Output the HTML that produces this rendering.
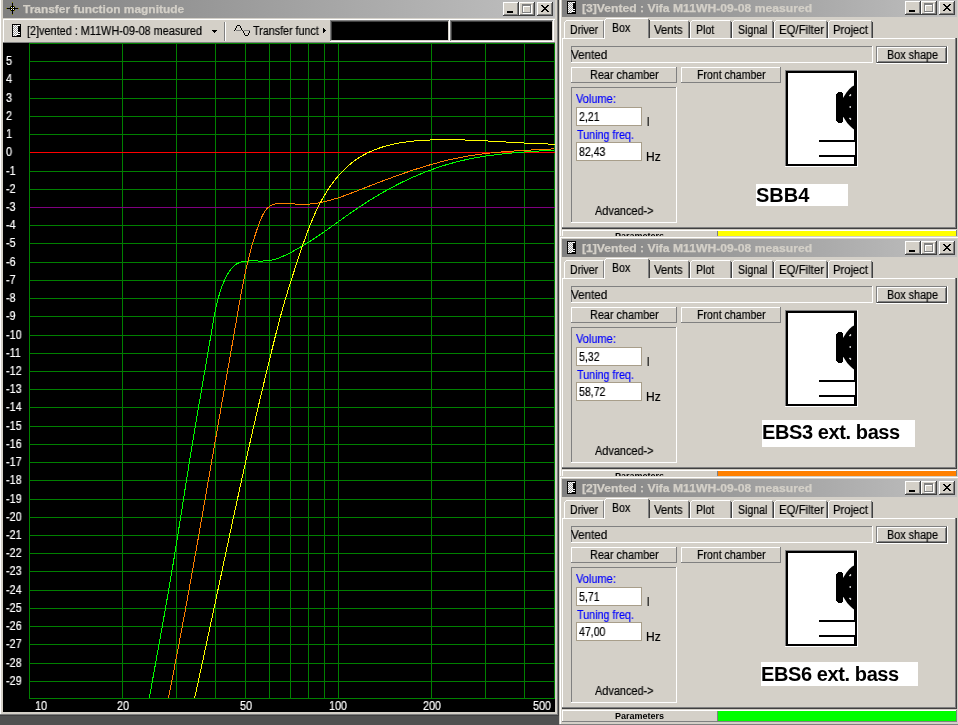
<!DOCTYPE html><html><head><meta charset="utf-8"><style>html,body{margin:0;padding:0}body{width:958px;height:725px;position:relative;overflow:hidden;background:#505050}body>div,body>span,body>svg,div>span{position:absolute}span{white-space:pre;line-height:normal;-webkit-font-smoothing:antialiased;will-change:transform}.u{font:12px 'Liberation Sans',sans-serif;transform-origin:0 0;-webkit-text-stroke:.2px}</style></head><body><div style="left:0px;top:0px;width:559px;height:716px;background:#404040;"></div>
<div style="left:0px;top:0px;width:558px;height:715px;background:#808080;"></div>
<div style="left:0px;top:0px;width:557px;height:714px;background:#d4d0c8;"></div>
<div style="left:0px;top:0px;width:1px;height:714px;background:#fff;"></div>
<div style="left:3px;top:0px;width:552px;height:18px;background:linear-gradient(to right,#808080,#c0c0c0);"></div>
<svg style="left:6px;top:2px" width="13" height="13" viewBox="0 0 13 13" shape-rendering="crispEdges"><rect x="6" y="0" width="1" height="13" fill="#000"/><rect x="0" y="6" width="13" height="1" fill="#000"/><rect x="4" y="4" width="5" height="5" fill="#000"/><rect x="5" y="5" width="1" height="1" fill="#fff"/><rect x="7" y="5" width="1" height="1" fill="#fff"/><rect x="5" y="7" width="1" height="1" fill="#fff"/><rect x="7" y="7" width="1" height="1" fill="#fff"/><rect x="6" y="0" width="1" height="1" fill="#808000"/><rect x="6" y="12" width="1" height="1" fill="#808000"/><rect x="0" y="6" width="1" height="1" fill="#808000"/><rect x="12" y="6" width="1" height="1" fill="#808000"/><rect x="4" y="4" width="1" height="1" fill="#808000"/><rect x="8" y="4" width="1" height="1" fill="#808000"/><rect x="4" y="8" width="1" height="1" fill="#808000"/><rect x="8" y="8" width="1" height="1" fill="#808000"/><rect x="6" y="6" width="1" height="1" fill="#808000"/></svg>
<span style="left:23px;top:3px;font:bold 11px 'Liberation Sans', sans-serif;color:#d4d0c8;transform:scaleX(1.085);transform-origin:0 0;-webkit-text-stroke:.25px">Transfer function magnitude</span>
<div style="left:503px;top:2px;width:16px;height:14px;background:#d4d0c8;"></div>
<div style="left:503px;top:2px;width:15px;height:1px;background:#fff;"></div>
<div style="left:503px;top:2px;width:1px;height:13px;background:#fff;"></div>
<div style="left:504px;top:14px;width:14px;height:1px;background:#808080;"></div>
<div style="left:517px;top:3px;width:1px;height:12px;background:#808080;"></div>
<div style="left:503px;top:15px;width:16px;height:1px;background:#404040;"></div>
<div style="left:518px;top:2px;width:1px;height:14px;background:#404040;"></div>
<div style="left:507px;top:11px;width:6px;height:2px;background:#000;"></div>
<div style="left:519px;top:2px;width:16px;height:14px;background:#d4d0c8;"></div>
<div style="left:519px;top:2px;width:15px;height:1px;background:#fff;"></div>
<div style="left:519px;top:2px;width:1px;height:13px;background:#fff;"></div>
<div style="left:520px;top:14px;width:14px;height:1px;background:#808080;"></div>
<div style="left:533px;top:3px;width:1px;height:12px;background:#808080;"></div>
<div style="left:519px;top:15px;width:16px;height:1px;background:#404040;"></div>
<div style="left:534px;top:2px;width:1px;height:14px;background:#404040;"></div>
<div style="left:523px;top:5px;width:9px;height:2px;background:#fff;"></div>
<div style="left:523px;top:5px;width:1px;height:9px;background:#fff;"></div>
<div style="left:531px;top:5px;width:1px;height:9px;background:#fff;"></div>
<div style="left:523px;top:13px;width:9px;height:1px;background:#fff;"></div>
<div style="left:522px;top:4px;width:9px;height:2px;background:#808080;"></div>
<div style="left:522px;top:4px;width:1px;height:9px;background:#808080;"></div>
<div style="left:530px;top:4px;width:1px;height:9px;background:#808080;"></div>
<div style="left:522px;top:12px;width:9px;height:1px;background:#808080;"></div>
<div style="left:537px;top:2px;width:16px;height:14px;background:#d4d0c8;"></div>
<div style="left:537px;top:2px;width:15px;height:1px;background:#fff;"></div>
<div style="left:537px;top:2px;width:1px;height:13px;background:#fff;"></div>
<div style="left:538px;top:14px;width:14px;height:1px;background:#808080;"></div>
<div style="left:551px;top:3px;width:1px;height:12px;background:#808080;"></div>
<div style="left:537px;top:15px;width:16px;height:1px;background:#404040;"></div>
<div style="left:552px;top:2px;width:1px;height:14px;background:#404040;"></div>
<svg style="left:541px;top:5px" width="8" height="7" viewBox="0 0 8 7"><path d="M0 0h2l2 2.5 2-2.5h2L5 3.5 8 7H6L4 4.5 2 7H0l3-3.5z" fill="#000" shape-rendering="crispEdges"/></svg>
<div style="left:3px;top:19px;width:552px;height:1px;background:#fff;"></div>
<div style="left:3px;top:19px;width:1px;height:23px;background:#fff;"></div>
<div style="left:3px;top:42px;width:552px;height:1px;background:#808080;"></div>
<svg style="left:12px;top:24px" width="9" height="13" viewBox="0 0 9 13" shape-rendering="crispEdges"><rect width="9" height="13" fill="#000"/><rect x="1" y="1" width="5" height="9" fill="#a0a0a0"/><rect x="1" y="10" width="4" height="2" fill="#a0a0a0"/><rect x="1" y="1" width="1" height="1" fill="#fff"/><rect x="3" y="1" width="1" height="1" fill="#fff"/><rect x="5" y="1" width="1" height="1" fill="#fff"/><rect x="2" y="2" width="1" height="1" fill="#fff"/><rect x="4" y="2" width="1" height="1" fill="#fff"/><rect x="1" y="3" width="1" height="1" fill="#fff"/><rect x="3" y="3" width="1" height="1" fill="#fff"/><rect x="5" y="3" width="1" height="1" fill="#fff"/><rect x="2" y="4" width="1" height="1" fill="#fff"/><rect x="4" y="4" width="1" height="1" fill="#fff"/><rect x="1" y="5" width="1" height="1" fill="#fff"/><rect x="3" y="5" width="1" height="1" fill="#fff"/><rect x="5" y="5" width="1" height="1" fill="#fff"/><rect x="2" y="6" width="1" height="1" fill="#fff"/><rect x="4" y="6" width="1" height="1" fill="#fff"/><rect x="1" y="7" width="1" height="1" fill="#fff"/><rect x="3" y="7" width="1" height="1" fill="#fff"/><rect x="5" y="7" width="1" height="1" fill="#fff"/><rect x="2" y="8" width="1" height="1" fill="#fff"/><rect x="4" y="8" width="1" height="1" fill="#fff"/><rect x="1" y="9" width="1" height="1" fill="#fff"/><rect x="3" y="9" width="1" height="1" fill="#fff"/><rect x="5" y="9" width="1" height="1" fill="#fff"/><rect x="2" y="10" width="1" height="1" fill="#fff"/><rect x="4" y="10" width="1" height="1" fill="#fff"/><rect x="1" y="11" width="1" height="1" fill="#fff"/><rect x="3" y="11" width="1" height="1" fill="#fff"/><rect x="6" y="1" width="2" height="1" fill="#fff"/><rect x="6" y="8" width="2" height="1" fill="#fff"/><rect x="5" y="10" width="3" height="1" fill="#fff"/></svg>
<span class="u" style="left:27px;top:24px;color:#000;transform:scaleX(0.906)">[2]vented : M11WH-09-08 measured</span>
<svg style="left:212px;top:30px" width="5" height="3" viewBox="0 0 5 3" shape-rendering="crispEdges"><path d="M0 0h5v1H4v1H3v1H2V2H1V1H0z" fill="#000"/></svg>
<div style="left:224px;top:22px;width:1px;height:19px;background:#808080;"></div>
<div style="left:225px;top:22px;width:1px;height:19px;background:#fff;"></div>
<svg style="left:230px;top:22px" width="24" height="16" viewBox="0 0 24 16" shape-rendering="crispEdges"><rect x="4" y="8" width="1" height="1" fill="#000"/><rect x="5" y="7" width="1" height="1" fill="#000"/><rect x="5" y="6" width="1" height="1" fill="#000"/><rect x="6" y="5" width="1" height="1" fill="#000"/><rect x="6" y="4" width="1" height="1" fill="#000"/><rect x="7" y="3" width="1" height="1" fill="#000"/><rect x="8" y="3" width="1" height="1" fill="#000"/><rect x="9" y="3" width="1" height="1" fill="#000"/><rect x="10" y="4" width="1" height="1" fill="#000"/><rect x="10" y="5" width="1" height="1" fill="#000"/><rect x="11" y="6" width="1" height="1" fill="#000"/><rect x="11" y="7" width="1" height="1" fill="#000"/><rect x="12" y="8" width="1" height="1" fill="#000"/><rect x="13" y="9" width="1" height="1" fill="#000"/><rect x="13" y="10" width="1" height="1" fill="#000"/><rect x="14" y="11" width="1" height="1" fill="#000"/><rect x="14" y="12" width="1" height="1" fill="#000"/><rect x="15" y="13" width="1" height="1" fill="#000"/><rect x="16" y="13" width="1" height="1" fill="#000"/><rect x="17" y="13" width="1" height="1" fill="#000"/><rect x="18" y="12" width="1" height="1" fill="#000"/><rect x="18" y="11" width="1" height="1" fill="#000"/><rect x="19" y="10" width="1" height="1" fill="#000"/><rect x="19" y="9" width="1" height="1" fill="#000"/><rect x="6" y="8" width="5" height="1" fill="#808080"/><rect x="14" y="8" width="6" height="1" fill="#808080"/></svg>
<span class="u" style="left:253px;top:24px;color:#000;transform:scaleX(0.894)">Transfer funct</span>
<svg style="left:323px;top:28px" width="3" height="5" viewBox="0 0 3 5" shape-rendering="crispEdges"><path d="M0 0h1v1h1v1h1v1H2v1H1v1H0z" fill="#000"/></svg>
<div style="left:330px;top:20px;width:120px;height:22px;background:#fff;"></div>
<div style="left:330px;top:20px;width:119px;height:21px;background:#808080;"></div>
<div style="left:331px;top:21px;width:118px;height:20px;background:#d4d0c8;"></div>
<div style="left:331px;top:21px;width:117px;height:19px;background:#404040;"></div>
<div style="left:332px;top:22px;width:116px;height:18px;background:#000;"></div>
<div style="left:450px;top:20px;width:104px;height:22px;background:#fff;"></div>
<div style="left:450px;top:20px;width:103px;height:21px;background:#808080;"></div>
<div style="left:451px;top:21px;width:102px;height:20px;background:#d4d0c8;"></div>
<div style="left:451px;top:21px;width:101px;height:19px;background:#404040;"></div>
<div style="left:452px;top:22px;width:100px;height:18px;background:#000;"></div>
<div style="left:3px;top:43px;width:552px;height:669px;background:#000;"></div>
<svg style="left:0;top:0" width="958" height="725" viewBox="0 0 958 725" shape-rendering="crispEdges"><rect x="29" y="43" width="1" height="656" fill="#008000"/><rect x="122" y="43" width="1" height="656" fill="#008000"/><rect x="176" y="43" width="1" height="656" fill="#008000"/><rect x="215" y="43" width="1" height="656" fill="#008000"/><rect x="245" y="43" width="1" height="656" fill="#008000"/><rect x="269" y="43" width="1" height="656" fill="#008000"/><rect x="290" y="43" width="1" height="656" fill="#008000"/><rect x="308" y="43" width="1" height="656" fill="#008000"/><rect x="324" y="43" width="1" height="656" fill="#008000"/><rect x="338" y="43" width="1" height="656" fill="#008000"/><rect x="431" y="43" width="1" height="656" fill="#008000"/><rect x="485" y="43" width="1" height="656" fill="#008000"/><rect x="524" y="43" width="1" height="656" fill="#008000"/><rect x="554" y="43" width="1" height="656" fill="#008000"/><rect x="29" y="43" width="526" height="1" fill="#008000"/><rect x="29" y="61" width="526" height="1" fill="#008000"/><rect x="29" y="79" width="526" height="1" fill="#008000"/><rect x="29" y="98" width="526" height="1" fill="#008000"/><rect x="29" y="116" width="526" height="1" fill="#008000"/><rect x="29" y="134" width="526" height="1" fill="#008000"/><rect x="30" y="152" width="525" height="1" fill="#ff0000"/><rect x="29" y="171" width="526" height="1" fill="#008000"/><rect x="29" y="189" width="526" height="1" fill="#008000"/><rect x="30" y="207" width="525" height="1" fill="#800080"/><rect x="29" y="225" width="526" height="1" fill="#008000"/><rect x="29" y="243" width="526" height="1" fill="#008000"/><rect x="29" y="262" width="526" height="1" fill="#008000"/><rect x="29" y="280" width="526" height="1" fill="#008000"/><rect x="29" y="298" width="526" height="1" fill="#008000"/><rect x="29" y="316" width="526" height="1" fill="#008000"/><rect x="29" y="335" width="526" height="1" fill="#008000"/><rect x="29" y="353" width="526" height="1" fill="#008000"/><rect x="29" y="371" width="526" height="1" fill="#008000"/><rect x="29" y="389" width="526" height="1" fill="#008000"/><rect x="29" y="407" width="526" height="1" fill="#008000"/><rect x="29" y="426" width="526" height="1" fill="#008000"/><rect x="29" y="444" width="526" height="1" fill="#008000"/><rect x="29" y="462" width="526" height="1" fill="#008000"/><rect x="29" y="480" width="526" height="1" fill="#008000"/><rect x="29" y="499" width="526" height="1" fill="#008000"/><rect x="29" y="517" width="526" height="1" fill="#008000"/><rect x="29" y="535" width="526" height="1" fill="#008000"/><rect x="29" y="553" width="526" height="1" fill="#008000"/><rect x="29" y="571" width="526" height="1" fill="#008000"/><rect x="29" y="590" width="526" height="1" fill="#008000"/><rect x="29" y="608" width="526" height="1" fill="#008000"/><rect x="29" y="626" width="526" height="1" fill="#008000"/><rect x="29" y="644" width="526" height="1" fill="#008000"/><rect x="29" y="663" width="526" height="1" fill="#008000"/><rect x="29" y="681" width="526" height="1" fill="#008000"/><rect x="29" y="698" width="526" height="1" fill="#008000"/><clipPath id="pc"><rect x="29" y="43" width="526" height="656"/></clipPath><g clip-path="url(#pc)" fill="none" stroke-width="1" shape-rendering="crispEdges"><path d="M149.30 698.41 L149.56 696.93 L149.82 695.45 L150.08 693.97 L150.34 692.49 L150.61 691.02 L150.87 689.54 L151.13 688.06 L151.40 686.58 L151.66 685.11 L151.92 683.63 L152.19 682.15 L152.45 680.67 L152.72 679.20 L152.98 677.72 L153.25 676.24 L153.51 674.77 L153.78 673.29 L154.04 671.81 L154.31 670.34 L154.57 668.86 L154.84 667.38 L155.11 665.91 L155.37 664.43 L155.64 662.95 L155.91 661.48 L156.17 660.00 L156.44 658.53 L156.71 657.05 L156.97 655.57 L157.24 654.10 L157.51 652.62 L157.77 651.15 L158.04 649.67 L158.31 648.19 L158.57 646.72 L158.84 645.24 L159.11 643.77 L159.37 642.29 L159.64 640.82 L159.91 639.34 L160.17 637.86 L160.44 636.39 L160.70 634.91 L160.97 633.44 L161.24 631.96 L161.50 630.49 L161.77 629.01 L162.03 627.53 L162.30 626.06 L162.56 624.58 L162.83 623.11 L163.09 621.63 L163.35 620.15 L163.62 618.68 L163.88 617.20 L164.14 615.73 L164.41 614.25 L164.67 612.77 L164.93 611.30 L165.19 609.82 L165.46 608.35 L165.72 606.87 L165.98 605.39 L166.24 603.92 L166.50 602.44 L166.76 600.96 L167.02 599.49 L167.28 598.01 L167.54 596.53 L167.79 595.06 L168.05 593.58 L168.31 592.10 L168.56 590.62 L168.82 589.15 L169.08 587.67 L169.33 586.19 L169.59 584.71 L169.84 583.24 L170.09 581.76 L170.35 580.28 L170.60 578.80 L170.85 577.32 L171.10 575.84 L171.35 574.37 L171.60 572.89 L171.85 571.41 L172.10 569.93 L172.35 568.45 L172.60 566.97 L172.84 565.49 L173.09 564.01 L173.33 562.53 L173.58 561.05 L173.82 559.57 L174.07 558.09 L174.31 556.61 L174.55 555.13 L174.80 553.65 L175.04 552.17 L175.28 550.69 L175.52 549.21 L175.76 547.73 L176.00 546.25 L176.24 544.77 L176.48 543.28 L176.72 541.80 L176.96 540.32 L177.20 538.84 L177.43 537.36 L177.67 535.88 L177.91 534.40 L178.15 532.91 L178.38 531.43 L178.62 529.95 L178.86 528.47 L179.09 526.99 L179.33 525.51 L179.56 524.02 L179.80 522.54 L180.03 521.06 L180.27 519.58 L180.50 518.10 L180.74 516.61 L180.97 515.13 L181.21 513.65 L181.44 512.17 L181.67 510.68 L181.91 509.20 L182.14 507.72 L182.37 506.24 L182.61 504.76 L182.84 503.27 L183.08 501.79 L183.31 500.31 L183.54 498.83 L183.78 497.35 L184.01 495.86 L184.24 494.38 L184.48 492.90 L184.71 491.42 L184.95 489.94 L185.18 488.45 L185.41 486.97 L185.65 485.49 L185.88 484.01 L186.12 482.53 L186.35 481.05 L186.59 479.56 L186.82 478.08 L187.06 476.60 L187.29 475.12 L187.53 473.64 L187.77 472.16 L188.00 470.68 L188.24 469.20 L188.48 467.72 L188.71 466.24 L188.95 464.75 L189.19 463.27 L189.43 461.79 L189.67 460.31 L189.90 458.83 L190.14 457.35 L190.38 455.87 L190.62 454.39 L190.86 452.91 L191.11 451.43 L191.35 449.96 L191.59 448.48 L191.83 447.00 L192.08 445.52 L192.32 444.04 L192.56 442.56 L192.81 441.08 L193.05 439.60 L193.30 438.13 L193.54 436.65 L193.79 435.17 L194.04 433.69 L194.28 432.21 L194.53 430.74 L194.78 429.26 L195.03 427.78 L195.28 426.30 L195.53 424.83 L195.78 423.35 L196.03 421.87 L196.28 420.40 L196.53 418.92 L196.78 417.44 L197.03 415.97 L197.28 414.49 L197.53 413.01 L197.79 411.54 L198.04 410.06 L198.29 408.58 L198.54 407.11 L198.80 405.63 L199.05 404.15 L199.30 402.68 L199.56 401.20 L199.81 399.72 L200.07 398.25 L200.32 396.77 L200.58 395.29 L200.83 393.82 L201.08 392.34 L201.34 390.86 L201.59 389.39 L201.85 387.91 L202.11 386.43 L202.36 384.96 L202.62 383.48 L202.87 382.00 L203.13 380.52 L203.38 379.05 L203.64 377.57 L203.89 376.09 L204.15 374.61 L204.40 373.14 L204.66 371.66 L204.92 370.18 L205.17 368.70 L205.43 367.23 L205.68 365.75 L205.94 364.27 L206.19 362.79 L206.45 361.31 L206.70 359.83 L206.96 358.35 L207.21 356.87 L207.47 355.40 L207.72 353.92 L207.97 352.44 L208.23 350.96 L208.48 349.48 L208.73 348.00 L208.99 346.52 L209.24 345.04 L209.49 343.55 L209.75 342.07 L210.00 340.59 L210.25 339.11 L210.50 337.63 L210.75 336.15 L211.01 334.66 L211.26 333.18 L211.51 331.70 L211.76 330.22 L212.01 328.73 L212.26 327.25 L212.51 325.77 L212.76 324.28 L213.01 322.80 L213.27 321.32 L213.53 319.84 L213.80 318.36 L214.07 316.88 L214.34 315.40 L214.62 313.92 L214.91 312.45 L215.21 310.97 L215.51 309.50 L215.82 308.03 L216.15 306.57 L216.48 305.10 L216.82 303.64 L217.18 302.18 L217.54 300.72 L217.92 299.27 L218.32 297.82 L218.73 296.38 L219.15 294.94 L219.59 293.50 L220.04 292.06 L220.51 290.63 L221.00 289.21 L221.51 287.79 L222.03 286.37 L222.58 284.96 L223.14 283.55 L223.73 282.15 L224.34 280.76 L224.97 279.37 L225.62 277.99 L226.30 276.62 L227.00 275.27 L227.74 273.95 L228.51 272.66 L229.31 271.41 L230.15 270.20 L231.02 269.05 L231.94 267.96 L232.90 266.93 L233.90 265.98 L234.95 265.11 L236.05 264.32 L237.20 263.63 L238.41 263.03 L239.66 262.53 L240.96 262.11 L242.31 261.77 L243.69 261.50 L245.12 261.29 L246.57 261.13 L248.05 261.03 L249.56 260.97 L251.09 260.93 L252.64 260.93 L254.21 260.94 L255.79 260.97 L257.37 260.99 L258.96 261.02 L260.55 261.03 L262.14 261.02 L263.72 260.99 L265.30 260.92 L266.86 260.82 L268.40 260.66 L269.93 260.45 L271.43 260.18 L272.91 259.85 L274.37 259.47 L275.82 259.04 L277.24 258.57 L278.65 258.06 L280.05 257.52 L281.44 256.94 L282.81 256.34 L284.17 255.72 L285.53 255.08 L286.88 254.43 L288.22 253.77 L289.55 253.09 L290.88 252.41 L292.21 251.72 L293.52 251.01 L294.84 250.30 L296.14 249.58 L297.45 248.85 L298.74 248.11 L300.03 247.36 L301.32 246.61 L302.61 245.85 L303.88 245.08 L305.16 244.30 L306.43 243.52 L307.70 242.73 L308.96 241.93 L310.22 241.13 L311.47 240.32 L312.73 239.50 L313.98 238.68 L315.22 237.86 L316.47 237.03 L317.71 236.19 L318.95 235.35 L320.18 234.51 L321.42 233.66 L322.65 232.81 L323.88 231.96 L325.11 231.10 L326.34 230.24 L327.56 229.38 L328.79 228.51 L330.01 227.65 L331.23 226.78 L332.46 225.91 L333.68 225.04 L334.90 224.16 L336.12 223.29 L337.34 222.42 L338.56 221.54 L339.79 220.67 L341.01 219.80 L342.23 218.92 L343.46 218.05 L344.68 217.18 L345.91 216.31 L347.13 215.44 L348.36 214.58 L349.59 213.71 L350.82 212.85 L352.06 211.99 L353.29 211.13 L354.53 210.28 L355.77 209.43 L357.01 208.58 L358.26 207.74 L359.51 206.90 L360.76 206.07 L362.01 205.24 L363.27 204.42 L364.53 203.60 L365.79 202.78 L367.06 201.97 L368.33 201.17 L369.60 200.37 L370.88 199.57 L372.16 198.78 L373.44 197.99 L374.72 197.21 L376.01 196.44 L377.30 195.67 L378.60 194.90 L379.89 194.14 L381.19 193.39 L382.50 192.64 L383.80 191.90 L385.11 191.16 L386.42 190.43 L387.74 189.70 L389.05 188.98 L390.37 188.27 L391.70 187.56 L393.02 186.86 L394.35 186.16 L395.68 185.47 L397.02 184.78 L398.35 184.11 L399.70 183.43 L401.04 182.77 L402.38 182.11 L403.73 181.45 L405.08 180.80 L406.44 180.16 L407.80 179.53 L409.16 178.90 L410.52 178.28 L411.88 177.66 L413.25 177.06 L414.62 176.45 L416.00 175.86 L417.37 175.27 L418.75 174.69 L420.13 174.12 L421.52 173.55 L422.90 172.99 L424.29 172.44 L425.69 171.89 L427.08 171.35 L428.48 170.82 L429.88 170.30 L431.28 169.78 L432.69 169.27 L434.10 168.77 L435.51 168.28 L436.92 167.79 L438.34 167.31 L439.75 166.84 L441.18 166.38 L442.60 165.93 L444.03 165.48 L445.45 165.04 L446.89 164.61 L448.32 164.18 L449.76 163.77 L451.19 163.36 L452.64 162.96 L454.08 162.57 L455.53 162.19 L456.97 161.82 L458.43 161.45 L459.88 161.09 L461.33 160.74 L462.79 160.40 L464.25 160.07 L465.72 159.75 L467.18 159.43 L468.65 159.13 L470.12 158.83 L471.59 158.53 L473.06 158.25 L474.54 157.97 L476.02 157.70 L477.49 157.44 L478.98 157.18 L480.46 156.93 L481.94 156.69 L483.43 156.46 L484.91 156.23 L486.40 156.00 L487.89 155.79 L489.38 155.58 L490.87 155.37 L492.36 155.17 L493.86 154.98 L495.35 154.79 L496.84 154.60 L498.34 154.43 L499.84 154.25 L501.33 154.08 L502.83 153.92 L504.33 153.76 L505.83 153.60 L507.33 153.45 L508.83 153.31 L510.33 153.16 L511.83 153.02 L513.33 152.89 L514.83 152.76 L516.33 152.63 L517.83 152.50 L519.33 152.38 L520.82 152.26 L522.32 152.14 L523.82 152.03 L525.32 151.92 L526.82 151.81 L528.32 151.70 L529.81 151.60 L531.31 151.49 L532.80 151.39 L534.30 151.29 L535.79 151.19 L537.28 151.10 L538.77 151.00 L540.26 150.91 L541.75 150.81 L543.24 150.72 L544.72 150.63 L546.21 150.54 L547.69 150.45 L549.17 150.35 L550.65 150.26 L552.13 150.17 L553.61 150.08 L554.33 150.04" stroke="#00ff00"/><path d="M168.30 698.41 L168.59 696.94 L168.89 695.46 L169.19 693.99 L169.48 692.52 L169.78 691.05 L170.07 689.58 L170.36 688.11 L170.66 686.64 L170.95 685.17 L171.24 683.69 L171.54 682.22 L171.83 680.75 L172.12 679.28 L172.41 677.81 L172.70 676.33 L172.99 674.86 L173.28 673.39 L173.57 671.92 L173.85 670.45 L174.14 668.97 L174.43 667.50 L174.72 666.03 L175.00 664.56 L175.29 663.08 L175.57 661.61 L175.86 660.14 L176.14 658.66 L176.43 657.19 L176.71 655.72 L176.99 654.25 L177.28 652.77 L177.56 651.30 L177.84 649.83 L178.12 648.35 L178.40 646.88 L178.69 645.41 L178.97 643.93 L179.25 642.46 L179.53 640.99 L179.80 639.51 L180.08 638.04 L180.36 636.56 L180.64 635.09 L180.92 633.62 L181.19 632.14 L181.47 630.67 L181.75 629.19 L182.02 627.72 L182.30 626.25 L182.58 624.77 L182.85 623.30 L183.13 621.82 L183.40 620.35 L183.67 618.87 L183.95 617.40 L184.22 615.93 L184.49 614.45 L184.77 612.98 L185.04 611.50 L185.31 610.03 L185.58 608.55 L185.86 607.08 L186.13 605.60 L186.40 604.13 L186.67 602.65 L186.94 601.18 L187.21 599.70 L187.48 598.23 L187.75 596.75 L188.02 595.28 L188.29 593.80 L188.55 592.33 L188.82 590.85 L189.09 589.37 L189.36 587.90 L189.62 586.42 L189.89 584.95 L190.16 583.47 L190.43 582.00 L190.69 580.52 L190.96 579.04 L191.22 577.57 L191.49 576.09 L191.76 574.62 L192.02 573.14 L192.29 571.67 L192.55 570.19 L192.81 568.71 L193.08 567.24 L193.34 565.76 L193.61 564.28 L193.87 562.81 L194.13 561.33 L194.40 559.86 L194.66 558.38 L194.92 556.90 L195.19 555.43 L195.45 553.95 L195.71 552.47 L195.97 551.00 L196.23 549.52 L196.50 548.04 L196.76 546.57 L197.02 545.09 L197.28 543.61 L197.54 542.14 L197.80 540.66 L198.06 539.18 L198.32 537.71 L198.58 536.23 L198.84 534.75 L199.10 533.28 L199.36 531.80 L199.62 530.32 L199.88 528.85 L200.14 527.37 L200.40 525.89 L200.66 524.42 L200.92 522.94 L201.18 521.46 L201.44 519.98 L201.70 518.51 L201.96 517.03 L202.22 515.55 L202.48 514.08 L202.73 512.60 L202.99 511.12 L203.25 509.64 L203.51 508.17 L203.77 506.69 L204.03 505.21 L204.28 503.74 L204.54 502.26 L204.80 500.78 L205.06 499.30 L205.31 497.83 L205.57 496.35 L205.83 494.87 L206.09 493.39 L206.35 491.92 L206.60 490.44 L206.86 488.96 L207.12 487.48 L207.38 486.01 L207.63 484.53 L207.89 483.05 L208.15 481.57 L208.41 480.10 L208.66 478.62 L208.92 477.14 L209.18 475.66 L209.43 474.19 L209.69 472.71 L209.95 471.23 L210.21 469.75 L210.46 468.28 L210.72 466.80 L210.98 465.32 L211.24 463.84 L211.49 462.36 L211.75 460.89 L212.01 459.41 L212.27 457.93 L212.52 456.45 L212.78 454.98 L213.04 453.50 L213.30 452.02 L213.55 450.54 L213.81 449.07 L214.07 447.59 L214.33 446.11 L214.59 444.63 L214.84 443.16 L215.10 441.68 L215.36 440.20 L215.62 438.72 L215.88 437.24 L216.14 435.77 L216.39 434.29 L216.65 432.81 L216.91 431.33 L217.17 429.86 L217.43 428.38 L217.69 426.90 L217.95 425.42 L218.21 423.95 L218.47 422.47 L218.73 420.99 L218.99 419.51 L219.24 418.03 L219.50 416.56 L219.76 415.08 L220.02 413.60 L220.28 412.12 L220.54 410.65 L220.80 409.17 L221.06 407.69 L221.32 406.21 L221.58 404.74 L221.84 403.26 L222.10 401.78 L222.36 400.30 L222.63 398.83 L222.89 397.35 L223.15 395.87 L223.41 394.39 L223.67 392.92 L223.93 391.44 L224.19 389.96 L224.45 388.48 L224.71 387.01 L224.97 385.53 L225.23 384.05 L225.49 382.58 L225.75 381.10 L226.01 379.62 L226.27 378.14 L226.53 376.67 L226.79 375.19 L227.05 373.71 L227.31 372.24 L227.57 370.76 L227.83 369.28 L228.09 367.80 L228.35 366.33 L228.61 364.85 L228.87 363.37 L229.13 361.90 L229.39 360.42 L229.65 358.94 L229.91 357.47 L230.17 355.99 L230.43 354.51 L230.69 353.04 L230.95 351.56 L231.21 350.08 L231.47 348.61 L231.73 347.13 L231.99 345.65 L232.25 344.18 L232.51 342.70 L232.77 341.22 L233.03 339.75 L233.29 338.27 L233.55 336.80 L233.80 335.32 L234.06 333.84 L234.32 332.37 L234.58 330.89 L234.84 329.41 L235.10 327.94 L235.35 326.46 L235.61 324.99 L235.87 323.51 L236.13 322.03 L236.38 320.56 L236.64 319.08 L236.90 317.61 L237.15 316.13 L237.41 314.66 L237.67 313.18 L237.92 311.71 L238.18 310.23 L238.44 308.76 L238.70 307.28 L238.95 305.81 L239.21 304.33 L239.47 302.86 L239.74 301.38 L240.00 299.91 L240.26 298.43 L240.53 296.96 L240.80 295.49 L241.06 294.01 L241.34 292.54 L241.61 291.07 L241.88 289.60 L242.16 288.13 L242.44 286.66 L242.73 285.19 L243.01 283.72 L243.30 282.25 L243.59 280.78 L243.89 279.31 L244.19 277.84 L244.49 276.37 L244.80 274.91 L245.11 273.44 L245.42 271.97 L245.74 270.51 L246.06 269.04 L246.39 267.58 L246.72 266.12 L247.06 264.66 L247.40 263.19 L247.74 261.73 L248.09 260.27 L248.45 258.81 L248.81 257.36 L249.18 255.90 L249.55 254.44 L249.93 252.99 L250.32 251.53 L250.71 250.08 L251.11 248.63 L251.51 247.17 L251.92 245.72 L252.34 244.27 L252.77 242.82 L253.20 241.38 L253.64 239.93 L254.08 238.48 L254.54 237.04 L255.00 235.59 L255.47 234.15 L255.94 232.71 L256.43 231.27 L256.92 229.83 L257.43 228.39 L257.94 226.96 L258.45 225.52 L258.98 224.09 L259.52 222.66 L260.07 221.23 L260.62 219.80 L261.20 218.39 L261.80 217.01 L262.43 215.65 L263.09 214.33 L263.79 213.05 L264.54 211.83 L265.33 210.66 L266.18 209.56 L267.09 208.54 L268.06 207.60 L269.10 206.75 L270.22 205.99 L271.41 205.34 L272.67 204.78 L273.99 204.31 L275.37 203.93 L276.80 203.63 L278.27 203.41 L279.78 203.25 L281.31 203.16 L282.86 203.13 L284.42 203.16 L285.99 203.23 L287.56 203.34 L289.14 203.47 L290.71 203.63 L292.28 203.79 L293.85 203.94 L295.42 204.08 L296.98 204.19 L298.53 204.27 L300.07 204.33 L301.60 204.35 L303.13 204.35 L304.65 204.32 L306.17 204.27 L307.68 204.19 L309.18 204.08 L310.67 203.95 L312.16 203.80 L313.65 203.62 L315.13 203.43 L316.60 203.21 L318.07 202.97 L319.53 202.71 L320.99 202.43 L322.44 202.13 L323.89 201.82 L325.34 201.48 L326.78 201.13 L328.22 200.77 L329.65 200.39 L331.08 199.99 L332.51 199.58 L333.93 199.16 L335.35 198.72 L336.77 198.28 L338.18 197.82 L339.60 197.35 L341.01 196.87 L342.42 196.38 L343.82 195.88 L345.23 195.38 L346.63 194.87 L348.03 194.35 L349.43 193.82 L350.83 193.29 L352.23 192.76 L353.63 192.22 L355.03 191.68 L356.42 191.14 L357.82 190.59 L359.22 190.05 L360.62 189.50 L362.01 188.95 L363.41 188.41 L364.81 187.86 L366.21 187.32 L367.61 186.77 L369.01 186.23 L370.41 185.68 L371.81 185.14 L373.22 184.60 L374.62 184.06 L376.02 183.52 L377.43 182.98 L378.83 182.44 L380.24 181.90 L381.64 181.37 L383.05 180.84 L384.46 180.31 L385.86 179.78 L387.27 179.25 L388.68 178.72 L390.09 178.20 L391.50 177.68 L392.91 177.16 L394.33 176.65 L395.74 176.13 L397.15 175.62 L398.57 175.12 L399.99 174.61 L401.40 174.11 L402.82 173.61 L404.24 173.12 L405.66 172.62 L407.08 172.14 L408.50 171.65 L409.92 171.17 L411.35 170.69 L412.77 170.22 L414.20 169.75 L415.62 169.28 L417.05 168.82 L418.48 168.36 L419.91 167.91 L421.34 167.46 L422.78 167.02 L424.21 166.58 L425.64 166.14 L427.08 165.71 L428.52 165.29 L429.96 164.87 L431.40 164.46 L432.84 164.05 L434.28 163.64 L435.72 163.25 L437.17 162.85 L438.61 162.47 L440.06 162.09 L441.51 161.71 L442.96 161.34 L444.41 160.98 L445.87 160.62 L447.32 160.27 L448.78 159.93 L450.24 159.59 L451.69 159.26 L453.16 158.94 L454.62 158.62 L456.08 158.31 L457.55 158.01 L459.01 157.71 L460.48 157.42 L461.95 157.14 L463.43 156.87 L464.90 156.60 L466.37 156.34 L467.85 156.09 L469.33 155.85 L470.81 155.61 L472.29 155.38 L473.77 155.15 L475.25 154.93 L476.74 154.72 L478.22 154.51 L479.71 154.31 L481.20 154.11 L482.69 153.92 L484.18 153.74 L485.67 153.56 L487.16 153.38 L488.65 153.22 L490.14 153.05 L491.64 152.89 L493.13 152.74 L494.63 152.59 L496.12 152.44 L497.62 152.30 L499.12 152.16 L500.61 152.03 L502.11 151.90 L503.61 151.78 L505.11 151.66 L506.61 151.54 L508.11 151.42 L509.61 151.31 L511.11 151.20 L512.61 151.10 L514.11 151.00 L515.61 150.90 L517.11 150.80 L518.61 150.70 L520.11 150.61 L521.61 150.52 L523.11 150.43 L524.61 150.35 L526.11 150.26 L527.60 150.18 L529.10 150.10 L530.60 150.02 L532.10 149.94 L533.60 149.86 L535.09 149.79 L536.59 149.71 L538.08 149.63 L539.58 149.56 L541.07 149.49 L542.57 149.41 L544.06 149.34 L545.55 149.27 L547.04 149.19 L548.53 149.12 L550.02 149.05 L551.51 148.97 L553.00 148.90 L554.36 148.83" stroke="#ff8000"/><path d="M194.51 698.39 L194.84 696.92 L195.16 695.46 L195.48 693.99 L195.81 692.53 L196.13 691.06 L196.45 689.60 L196.78 688.13 L197.10 686.67 L197.42 685.20 L197.74 683.73 L198.07 682.27 L198.39 680.80 L198.71 679.34 L199.03 677.87 L199.35 676.41 L199.67 674.94 L199.99 673.48 L200.31 672.01 L200.63 670.54 L200.95 669.08 L201.27 667.61 L201.59 666.15 L201.91 664.68 L202.23 663.21 L202.54 661.75 L202.86 660.28 L203.18 658.82 L203.50 657.35 L203.81 655.88 L204.13 654.42 L204.45 652.95 L204.76 651.49 L205.08 650.02 L205.40 648.55 L205.71 647.09 L206.03 645.62 L206.35 644.15 L206.66 642.69 L206.98 641.22 L207.29 639.75 L207.61 638.29 L207.92 636.82 L208.24 635.36 L208.55 633.89 L208.87 632.42 L209.18 630.96 L209.49 629.49 L209.81 628.02 L210.12 626.56 L210.44 625.09 L210.75 623.62 L211.06 622.16 L211.38 620.69 L211.69 619.22 L212.00 617.76 L212.32 616.29 L212.63 614.82 L212.94 613.36 L213.26 611.89 L213.57 610.42 L213.88 608.96 L214.19 607.49 L214.51 606.02 L214.82 604.55 L215.13 603.09 L215.44 601.62 L215.76 600.15 L216.07 598.69 L216.38 597.22 L216.69 595.75 L217.01 594.29 L217.32 592.82 L217.63 591.35 L217.94 589.89 L218.25 588.42 L218.57 586.95 L218.88 585.49 L219.19 584.02 L219.50 582.55 L219.82 581.09 L220.13 579.62 L220.44 578.15 L220.75 576.69 L221.06 575.22 L221.38 573.75 L221.69 572.29 L222.00 570.82 L222.31 569.35 L222.63 567.89 L222.94 566.42 L223.25 564.95 L223.56 563.49 L223.88 562.02 L224.19 560.55 L224.50 559.09 L224.82 557.62 L225.13 556.15 L225.44 554.69 L225.76 553.22 L226.07 551.75 L226.38 550.29 L226.70 548.82 L227.01 547.35 L227.32 545.89 L227.64 544.42 L227.95 542.95 L228.26 541.49 L228.58 540.02 L228.89 538.56 L229.21 537.09 L229.52 535.62 L229.84 534.16 L230.15 532.69 L230.47 531.22 L230.78 529.76 L231.10 528.29 L231.41 526.83 L231.73 525.36 L232.05 523.89 L232.36 522.43 L232.68 520.96 L232.99 519.50 L233.31 518.03 L233.63 516.56 L233.95 515.10 L234.26 513.63 L234.58 512.17 L234.90 510.70 L235.22 509.24 L235.53 507.77 L235.85 506.31 L236.17 504.84 L236.49 503.37 L236.81 501.91 L237.13 500.44 L237.45 498.98 L237.77 497.51 L238.09 496.05 L238.41 494.58 L238.73 493.12 L239.05 491.65 L239.37 490.19 L239.69 488.72 L240.02 487.26 L240.34 485.79 L240.66 484.33 L240.98 482.86 L241.31 481.40 L241.63 479.93 L241.95 478.47 L242.28 477.01 L242.60 475.54 L242.93 474.08 L243.25 472.61 L243.58 471.15 L243.90 469.68 L244.23 468.22 L244.55 466.76 L244.88 465.29 L245.21 463.83 L245.53 462.36 L245.86 460.90 L246.19 459.44 L246.52 457.97 L246.85 456.51 L247.18 455.05 L247.51 453.58 L247.84 452.12 L248.17 450.66 L248.50 449.19 L248.83 447.73 L249.16 446.27 L249.49 444.80 L249.82 443.34 L250.16 441.88 L250.49 440.41 L250.82 438.95 L251.16 437.49 L251.49 436.03 L251.83 434.56 L252.16 433.10 L252.50 431.64 L252.83 430.18 L253.17 428.71 L253.50 427.25 L253.84 425.79 L254.18 424.33 L254.52 422.87 L254.85 421.40 L255.19 419.94 L255.53 418.48 L255.87 417.02 L256.21 415.56 L256.55 414.10 L256.89 412.64 L257.23 411.17 L257.57 409.71 L257.91 408.25 L258.26 406.79 L258.60 405.33 L258.94 403.87 L259.28 402.41 L259.63 400.95 L259.97 399.49 L260.32 398.03 L260.66 396.57 L261.01 395.11 L261.35 393.65 L261.70 392.19 L262.05 390.73 L262.39 389.27 L262.74 387.81 L263.09 386.35 L263.44 384.89 L263.78 383.43 L264.13 381.97 L264.48 380.51 L264.83 379.05 L265.18 377.59 L265.53 376.13 L265.88 374.67 L266.24 373.21 L266.59 371.75 L266.94 370.29 L267.29 368.84 L267.65 367.38 L268.00 365.92 L268.35 364.46 L268.71 363.00 L269.06 361.54 L269.42 360.09 L269.78 358.63 L270.13 357.17 L270.49 355.71 L270.85 354.25 L271.20 352.80 L271.56 351.34 L271.92 349.88 L272.28 348.42 L272.64 346.97 L273.00 345.51 L273.36 344.06 L273.72 342.60 L274.09 341.14 L274.45 339.69 L274.82 338.23 L275.18 336.78 L275.55 335.32 L275.92 333.87 L276.29 332.42 L276.66 330.97 L277.04 329.51 L277.41 328.06 L277.79 326.61 L278.17 325.16 L278.54 323.71 L278.93 322.26 L279.31 320.82 L279.69 319.37 L280.08 317.92 L280.47 316.48 L280.86 315.03 L281.26 313.59 L281.65 312.15 L282.05 310.71 L282.45 309.27 L282.85 307.83 L283.26 306.39 L283.67 304.95 L284.08 303.52 L284.49 302.08 L284.91 300.65 L285.33 299.22 L285.75 297.79 L286.18 296.36 L286.60 294.93 L287.03 293.51 L287.47 292.08 L287.90 290.65 L288.34 289.23 L288.78 287.81 L289.22 286.38 L289.67 284.96 L290.12 283.54 L290.57 282.12 L291.02 280.70 L291.47 279.28 L291.93 277.86 L292.38 276.44 L292.84 275.01 L293.30 273.59 L293.76 272.17 L294.23 270.75 L294.69 269.33 L295.16 267.91 L295.62 266.49 L296.09 265.06 L296.56 263.64 L297.03 262.21 L297.50 260.79 L297.97 259.36 L298.44 257.93 L298.92 256.51 L299.39 255.08 L299.87 253.65 L300.34 252.22 L300.82 250.79 L301.30 249.36 L301.79 247.93 L302.27 246.50 L302.76 245.07 L303.26 243.64 L303.75 242.21 L304.25 240.79 L304.76 239.36 L305.26 237.94 L305.77 236.51 L306.29 235.09 L306.81 233.67 L307.34 232.26 L307.87 230.84 L308.41 229.43 L308.95 228.02 L309.50 226.61 L310.06 225.21 L310.62 223.81 L311.19 222.41 L311.77 221.01 L312.35 219.62 L312.94 218.23 L313.54 216.85 L314.15 215.47 L314.77 214.09 L315.39 212.72 L316.03 211.36 L316.67 210.00 L317.32 208.64 L317.98 207.29 L318.65 205.94 L319.33 204.60 L320.03 203.26 L320.73 201.93 L321.44 200.61 L322.17 199.29 L322.90 197.98 L323.65 196.68 L324.41 195.38 L325.18 194.09 L325.96 192.80 L326.76 191.52 L327.57 190.25 L328.39 188.99 L329.22 187.74 L330.07 186.49 L330.93 185.26 L331.81 184.03 L332.70 182.82 L333.60 181.62 L334.51 180.43 L335.44 179.25 L336.39 178.08 L337.35 176.93 L338.32 175.79 L339.31 174.67 L340.32 173.56 L341.33 172.46 L342.37 171.39 L343.41 170.33 L344.48 169.28 L345.55 168.25 L346.64 167.24 L347.75 166.25 L348.87 165.28 L350.00 164.32 L351.14 163.39 L352.30 162.47 L353.48 161.57 L354.66 160.69 L355.86 159.84 L357.07 159.00 L358.29 158.19 L359.53 157.40 L360.77 156.63 L362.03 155.88 L363.31 155.15 L364.59 154.45 L365.88 153.76 L367.19 153.10 L368.50 152.46 L369.83 151.84 L371.17 151.24 L372.51 150.66 L373.87 150.10 L375.24 149.55 L376.61 149.03 L377.99 148.53 L379.39 148.04 L380.79 147.57 L382.20 147.12 L383.61 146.68 L385.04 146.27 L386.47 145.87 L387.91 145.48 L389.35 145.11 L390.80 144.76 L392.26 144.42 L393.73 144.10 L395.20 143.79 L396.67 143.50 L398.15 143.22 L399.64 142.95 L401.13 142.70 L402.63 142.46 L404.13 142.23 L405.63 142.02 L407.14 141.81 L408.65 141.62 L410.16 141.44 L411.68 141.27 L413.20 141.11 L414.72 140.97 L416.24 140.83 L417.77 140.70 L419.29 140.58 L420.82 140.47 L422.35 140.37 L423.88 140.28 L425.41 140.20 L426.95 140.12 L428.48 140.06 L430.01 139.99 L431.54 139.94 L433.07 139.89 L434.60 139.85 L436.13 139.82 L437.65 139.79 L439.18 139.76 L440.70 139.74 L442.22 139.73 L443.74 139.72 L445.25 139.71 L446.77 139.71 L448.28 139.72 L449.79 139.72 L451.30 139.73 L452.80 139.75 L454.31 139.77 L455.81 139.79 L457.31 139.82 L458.81 139.85 L460.31 139.88 L461.81 139.92 L463.30 139.96 L464.80 140.00 L466.29 140.05 L467.78 140.10 L469.28 140.15 L470.77 140.20 L472.26 140.26 L473.74 140.32 L475.23 140.38 L476.72 140.44 L478.20 140.51 L479.69 140.58 L481.17 140.65 L482.66 140.72 L484.14 140.79 L485.62 140.87 L487.11 140.95 L488.59 141.02 L490.07 141.10 L491.55 141.18 L493.03 141.26 L494.52 141.35 L496.00 141.43 L497.48 141.51 L498.96 141.60 L500.44 141.68 L501.93 141.77 L503.41 141.85 L504.89 141.94 L506.38 142.03 L507.86 142.11 L509.35 142.20 L510.83 142.28 L512.32 142.37 L513.80 142.45 L515.29 142.54 L516.78 142.62 L518.27 142.70 L519.76 142.79 L521.25 142.87 L522.74 142.95 L524.24 143.02 L525.73 143.10 L527.23 143.18 L528.73 143.25 L530.22 143.32 L531.72 143.39 L533.23 143.46 L534.73 143.53 L536.24 143.60 L537.74 143.66 L539.25 143.72 L540.76 143.78 L542.27 143.83 L543.79 143.89 L545.31 143.94 L546.82 143.98 L548.35 144.03 L549.87 144.07 L551.39 144.11 L552.92 144.14 L554.45 144.17 L554.60 144.18" stroke="#ffff00"/></g></svg>
<span class="u" style="left:6px;top:54px;color:#fff;transform:scaleX(0.9)">5</span>
<span class="u" style="left:6px;top:72px;color:#fff;transform:scaleX(0.9)">4</span>
<span class="u" style="left:6px;top:91px;color:#fff;transform:scaleX(0.9)">3</span>
<span class="u" style="left:6px;top:109px;color:#fff;transform:scaleX(0.9)">2</span>
<span class="u" style="left:6px;top:127px;color:#fff;transform:scaleX(0.9)">1</span>
<span class="u" style="left:6px;top:145px;color:#fff;transform:scaleX(0.9)">0</span>
<span class="u" style="left:6px;top:164px;color:#fff;transform:scaleX(0.9)">-1</span>
<span class="u" style="left:6px;top:182px;color:#fff;transform:scaleX(0.9)">-2</span>
<span class="u" style="left:6px;top:200px;color:#fff;transform:scaleX(0.9)">-3</span>
<span class="u" style="left:6px;top:218px;color:#fff;transform:scaleX(0.9)">-4</span>
<span class="u" style="left:6px;top:236px;color:#fff;transform:scaleX(0.9)">-5</span>
<span class="u" style="left:6px;top:255px;color:#fff;transform:scaleX(0.9)">-6</span>
<span class="u" style="left:6px;top:273px;color:#fff;transform:scaleX(0.9)">-7</span>
<span class="u" style="left:6px;top:291px;color:#fff;transform:scaleX(0.9)">-8</span>
<span class="u" style="left:6px;top:309px;color:#fff;transform:scaleX(0.9)">-9</span>
<span class="u" style="left:6px;top:328px;color:#fff;transform:scaleX(0.9)">-10</span>
<span class="u" style="left:6px;top:346px;color:#fff;transform:scaleX(0.9)">-11</span>
<span class="u" style="left:6px;top:364px;color:#fff;transform:scaleX(0.9)">-12</span>
<span class="u" style="left:6px;top:382px;color:#fff;transform:scaleX(0.9)">-13</span>
<span class="u" style="left:6px;top:400px;color:#fff;transform:scaleX(0.9)">-14</span>
<span class="u" style="left:6px;top:419px;color:#fff;transform:scaleX(0.9)">-15</span>
<span class="u" style="left:6px;top:437px;color:#fff;transform:scaleX(0.9)">-16</span>
<span class="u" style="left:6px;top:455px;color:#fff;transform:scaleX(0.9)">-17</span>
<span class="u" style="left:6px;top:473px;color:#fff;transform:scaleX(0.9)">-18</span>
<span class="u" style="left:6px;top:492px;color:#fff;transform:scaleX(0.9)">-19</span>
<span class="u" style="left:6px;top:510px;color:#fff;transform:scaleX(0.9)">-20</span>
<span class="u" style="left:6px;top:528px;color:#fff;transform:scaleX(0.9)">-21</span>
<span class="u" style="left:6px;top:546px;color:#fff;transform:scaleX(0.9)">-22</span>
<span class="u" style="left:6px;top:564px;color:#fff;transform:scaleX(0.9)">-23</span>
<span class="u" style="left:6px;top:583px;color:#fff;transform:scaleX(0.9)">-24</span>
<span class="u" style="left:6px;top:601px;color:#fff;transform:scaleX(0.9)">-25</span>
<span class="u" style="left:6px;top:619px;color:#fff;transform:scaleX(0.9)">-26</span>
<span class="u" style="left:6px;top:637px;color:#fff;transform:scaleX(0.9)">-27</span>
<span class="u" style="left:6px;top:656px;color:#fff;transform:scaleX(0.9)">-28</span>
<span class="u" style="left:6px;top:674px;color:#fff;transform:scaleX(0.9)">-29</span>
<span class="u" style="left:35px;top:699px;color:#fff;transform:scaleX(0.9)">10</span>
<span class="u" style="left:117px;top:699px;color:#fff;transform:scaleX(0.9)">20</span>
<span class="u" style="left:240px;top:699px;color:#fff;transform:scaleX(0.9)">50</span>
<span class="u" style="left:329px;top:699px;color:#fff;transform:scaleX(0.9)">100</span>
<span class="u" style="left:423px;top:699px;color:#fff;transform:scaleX(0.9)">200</span>
<span class="u" style="left:533px;top:699px;color:#fff;transform:scaleX(0.9)">500</span>
<div style="left:559px;top:-4px;width:399px;height:249px;background:#d4d0c8;"></div>
<div style="left:560px;top:-3px;width:1px;height:248px;background:#fff;"></div>
<div style="left:560px;top:-3px;width:398px;height:1px;background:#fff;"></div>
<div style="left:562px;top:-1px;width:395px;height:18px;background:linear-gradient(to right,#808080,#c0c0c0);"></div>
<svg style="left:567px;top:1px" width="9" height="13" viewBox="0 0 9 13" shape-rendering="crispEdges"><rect width="9" height="13" fill="#000"/><rect x="1" y="1" width="5" height="9" fill="#a0a0a0"/><rect x="1" y="10" width="4" height="2" fill="#a0a0a0"/><rect x="1" y="1" width="1" height="1" fill="#fff"/><rect x="3" y="1" width="1" height="1" fill="#fff"/><rect x="5" y="1" width="1" height="1" fill="#fff"/><rect x="2" y="2" width="1" height="1" fill="#fff"/><rect x="4" y="2" width="1" height="1" fill="#fff"/><rect x="1" y="3" width="1" height="1" fill="#fff"/><rect x="3" y="3" width="1" height="1" fill="#fff"/><rect x="5" y="3" width="1" height="1" fill="#fff"/><rect x="2" y="4" width="1" height="1" fill="#fff"/><rect x="4" y="4" width="1" height="1" fill="#fff"/><rect x="1" y="5" width="1" height="1" fill="#fff"/><rect x="3" y="5" width="1" height="1" fill="#fff"/><rect x="5" y="5" width="1" height="1" fill="#fff"/><rect x="2" y="6" width="1" height="1" fill="#fff"/><rect x="4" y="6" width="1" height="1" fill="#fff"/><rect x="1" y="7" width="1" height="1" fill="#fff"/><rect x="3" y="7" width="1" height="1" fill="#fff"/><rect x="5" y="7" width="1" height="1" fill="#fff"/><rect x="2" y="8" width="1" height="1" fill="#fff"/><rect x="4" y="8" width="1" height="1" fill="#fff"/><rect x="1" y="9" width="1" height="1" fill="#fff"/><rect x="3" y="9" width="1" height="1" fill="#fff"/><rect x="5" y="9" width="1" height="1" fill="#fff"/><rect x="2" y="10" width="1" height="1" fill="#fff"/><rect x="4" y="10" width="1" height="1" fill="#fff"/><rect x="1" y="11" width="1" height="1" fill="#fff"/><rect x="3" y="11" width="1" height="1" fill="#fff"/><rect x="6" y="1" width="2" height="1" fill="#fff"/><rect x="6" y="8" width="2" height="1" fill="#fff"/><rect x="5" y="10" width="3" height="1" fill="#fff"/></svg>
<span style="left:582px;top:2px;font:bold 11px 'Liberation Sans', sans-serif;color:#d4d0c8;transform:scaleX(1.105);transform-origin:0 0;-webkit-text-stroke:.25px">[3]Vented : Vifa M11WH-09-08 measured</span>
<div style="left:905px;top:1px;width:16px;height:14px;background:#d4d0c8;"></div>
<div style="left:905px;top:1px;width:15px;height:1px;background:#fff;"></div>
<div style="left:905px;top:1px;width:1px;height:13px;background:#fff;"></div>
<div style="left:906px;top:13px;width:14px;height:1px;background:#808080;"></div>
<div style="left:919px;top:2px;width:1px;height:12px;background:#808080;"></div>
<div style="left:905px;top:14px;width:16px;height:1px;background:#404040;"></div>
<div style="left:920px;top:1px;width:1px;height:14px;background:#404040;"></div>
<div style="left:909px;top:10px;width:6px;height:2px;background:#000;"></div>
<div style="left:921px;top:1px;width:16px;height:14px;background:#d4d0c8;"></div>
<div style="left:921px;top:1px;width:15px;height:1px;background:#fff;"></div>
<div style="left:921px;top:1px;width:1px;height:13px;background:#fff;"></div>
<div style="left:922px;top:13px;width:14px;height:1px;background:#808080;"></div>
<div style="left:935px;top:2px;width:1px;height:12px;background:#808080;"></div>
<div style="left:921px;top:14px;width:16px;height:1px;background:#404040;"></div>
<div style="left:936px;top:1px;width:1px;height:14px;background:#404040;"></div>
<div style="left:925px;top:4px;width:9px;height:2px;background:#fff;"></div>
<div style="left:925px;top:4px;width:1px;height:9px;background:#fff;"></div>
<div style="left:933px;top:4px;width:1px;height:9px;background:#fff;"></div>
<div style="left:925px;top:12px;width:9px;height:1px;background:#fff;"></div>
<div style="left:924px;top:3px;width:9px;height:2px;background:#808080;"></div>
<div style="left:924px;top:3px;width:1px;height:9px;background:#808080;"></div>
<div style="left:932px;top:3px;width:1px;height:9px;background:#808080;"></div>
<div style="left:924px;top:11px;width:9px;height:1px;background:#808080;"></div>
<div style="left:939px;top:1px;width:16px;height:14px;background:#d4d0c8;"></div>
<div style="left:939px;top:1px;width:15px;height:1px;background:#fff;"></div>
<div style="left:939px;top:1px;width:1px;height:13px;background:#fff;"></div>
<div style="left:940px;top:13px;width:14px;height:1px;background:#808080;"></div>
<div style="left:953px;top:2px;width:1px;height:12px;background:#808080;"></div>
<div style="left:939px;top:14px;width:16px;height:1px;background:#404040;"></div>
<div style="left:954px;top:1px;width:1px;height:14px;background:#404040;"></div>
<svg style="left:943px;top:4px" width="8" height="7" viewBox="0 0 8 7"><path d="M0 0h2l2 2.5 2-2.5h2L5 3.5 8 7H6L4 4.5 2 7H0l3-3.5z" fill="#000" shape-rendering="crispEdges"/></svg>
<div style="left:562px;top:38px;width:395px;height:191px;background:#404040;"></div>
<div style="left:562px;top:38px;width:394px;height:190px;background:#808080;"></div>
<div style="left:562px;top:38px;width:393px;height:189px;background:#fff;"></div>
<div style="left:563px;top:39px;width:392px;height:188px;background:#d4d0c8;"></div>
<div style="left:566px;top:20px;width:37px;height:1px;background:#fff;"></div>
<div style="left:565px;top:21px;width:1px;height:1px;background:#fff;"></div>
<div style="left:564px;top:22px;width:1px;height:16px;background:#fff;"></div>
<div style="left:603px;top:21px;width:1px;height:17px;background:#808080;"></div>
<div style="left:604px;top:22px;width:1px;height:16px;background:#404040;"></div>
<span class="u" style="left:570px;top:23px;color:#000;transform:scaleX(0.88)">Driver</span>
<div style="left:650px;top:20px;width:38px;height:1px;background:#fff;"></div>
<div style="left:649px;top:21px;width:1px;height:1px;background:#fff;"></div>
<div style="left:648px;top:22px;width:1px;height:16px;background:#fff;"></div>
<div style="left:688px;top:21px;width:1px;height:17px;background:#808080;"></div>
<div style="left:689px;top:22px;width:1px;height:16px;background:#404040;"></div>
<span class="u" style="left:654px;top:23px;color:#000;transform:scaleX(0.95)">Vents</span>
<div style="left:692px;top:20px;width:38px;height:1px;background:#fff;"></div>
<div style="left:691px;top:21px;width:1px;height:1px;background:#fff;"></div>
<div style="left:690px;top:22px;width:1px;height:16px;background:#fff;"></div>
<div style="left:730px;top:21px;width:1px;height:17px;background:#808080;"></div>
<div style="left:731px;top:22px;width:1px;height:16px;background:#404040;"></div>
<span class="u" style="left:696px;top:23px;color:#000;transform:scaleX(0.88)">Plot</span>
<div style="left:734px;top:20px;width:38px;height:1px;background:#fff;"></div>
<div style="left:733px;top:21px;width:1px;height:1px;background:#fff;"></div>
<div style="left:732px;top:22px;width:1px;height:16px;background:#fff;"></div>
<div style="left:772px;top:21px;width:1px;height:17px;background:#808080;"></div>
<div style="left:773px;top:22px;width:1px;height:16px;background:#404040;"></div>
<span class="u" style="left:738px;top:23px;color:#000;transform:scaleX(0.88)">Signal</span>
<div style="left:776px;top:20px;width:50px;height:1px;background:#fff;"></div>
<div style="left:775px;top:21px;width:1px;height:1px;background:#fff;"></div>
<div style="left:774px;top:22px;width:1px;height:16px;background:#fff;"></div>
<div style="left:826px;top:21px;width:1px;height:17px;background:#808080;"></div>
<div style="left:827px;top:22px;width:1px;height:16px;background:#404040;"></div>
<span class="u" style="left:779px;top:23px;color:#000;transform:scaleX(0.95)">EQ/Filter</span>
<div style="left:830px;top:20px;width:41px;height:1px;background:#fff;"></div>
<div style="left:829px;top:21px;width:1px;height:1px;background:#fff;"></div>
<div style="left:828px;top:22px;width:1px;height:16px;background:#fff;"></div>
<div style="left:871px;top:21px;width:1px;height:17px;background:#808080;"></div>
<div style="left:872px;top:22px;width:1px;height:16px;background:#404040;"></div>
<span class="u" style="left:833px;top:23px;color:#000;transform:scaleX(0.935)">Project</span>
<div style="left:604px;top:18px;width:46px;height:21px;background:#d4d0c8;"></div>
<div style="left:606px;top:18px;width:42px;height:1px;background:#fff;"></div>
<div style="left:605px;top:19px;width:1px;height:1px;background:#fff;"></div>
<div style="left:604px;top:20px;width:1px;height:19px;background:#fff;"></div>
<div style="left:648px;top:19px;width:1px;height:19px;background:#808080;"></div>
<div style="left:649px;top:20px;width:1px;height:18px;background:#404040;"></div>
<span class="u" style="left:612px;top:21px;color:#000;transform:scaleX(0.88)">Box</span>
<div style="left:571px;top:46px;width:302px;height:1px;background:#808080;"></div>
<div style="left:571px;top:46px;width:1px;height:17px;background:#808080;"></div>
<div style="left:571px;top:62px;width:302px;height:1px;background:#fff;"></div>
<div style="left:872px;top:46px;width:1px;height:17px;background:#fff;"></div>
<span class="u" style="left:571px;top:48px;color:#000;transform:scaleX(0.97)">Vented</span>
<div style="left:876px;top:46px;width:72px;height:1px;background:#808080;"></div>
<div style="left:876px;top:46px;width:1px;height:18px;background:#808080;"></div>
<div style="left:876px;top:63px;width:72px;height:1px;background:#fff;"></div>
<div style="left:947px;top:46px;width:1px;height:18px;background:#fff;"></div>
<div style="left:877px;top:47px;width:70px;height:1px;background:#fff;"></div>
<div style="left:877px;top:47px;width:1px;height:16px;background:#fff;"></div>
<div style="left:877px;top:62px;width:70px;height:1px;background:#404040;"></div>
<div style="left:946px;top:47px;width:1px;height:16px;background:#404040;"></div>
<div style="left:878px;top:61px;width:68px;height:1px;background:#808080;"></div>
<div style="left:945px;top:48px;width:1px;height:14px;background:#808080;"></div>
<span class="u" style="left:887px;top:48px;color:#000;transform:scaleX(0.9)">Box shape</span>
<div style="left:571px;top:67px;width:106px;height:1px;background:#fff;"></div>
<div style="left:571px;top:67px;width:1px;height:16px;background:#fff;"></div>
<div style="left:571px;top:82px;width:106px;height:1px;background:#808080;"></div>
<div style="left:676px;top:67px;width:1px;height:16px;background:#808080;"></div>
<span class="u" style="left:590px;top:68px;color:#000;transform:scaleX(0.905)">Rear chamber</span>
<div style="left:681px;top:67px;width:100px;height:1px;background:#fff;"></div>
<div style="left:681px;top:67px;width:1px;height:16px;background:#fff;"></div>
<div style="left:681px;top:82px;width:100px;height:1px;background:#808080;"></div>
<div style="left:780px;top:67px;width:1px;height:16px;background:#808080;"></div>
<span class="u" style="left:697px;top:68px;color:#000;transform:scaleX(0.88)">Front chamber</span>
<div style="left:571px;top:87px;width:106px;height:1px;background:#808080;"></div>
<div style="left:571px;top:87px;width:1px;height:136px;background:#808080;"></div>
<div style="left:571px;top:222px;width:106px;height:1px;background:#fff;"></div>
<div style="left:676px;top:87px;width:1px;height:136px;background:#fff;"></div>
<span class="u" style="left:576px;top:92px;color:#0000ff;transform:scaleX(0.92)">Volume:</span>
<div style="left:576px;top:107px;width:66px;height:19px;background:#a89e8a;"></div>
<div style="left:577px;top:108px;width:64px;height:17px;background:#fff;"></div>
<span class="u" style="left:579px;top:110px;color:#000;transform:scaleX(0.88)">2,21</span>
<span class="u" style="left:647px;top:115px;color:#000;transform:scaleX(0.88)">l</span>
<div style="left:576px;top:142px;width:66px;height:19px;background:#a89e8a;"></div>
<div style="left:577px;top:143px;width:64px;height:17px;background:#fff;"></div>
<span class="u" style="left:579px;top:145px;color:#000;transform:scaleX(0.88)">82,43</span>
<span class="u" style="left:646px;top:150px;color:#000;transform:scaleX(1.0)">Hz</span>
<span class="u" style="left:577px;top:128px;color:#0000ff;transform:scaleX(0.895)">Tuning freq.</span>
<span class="u" style="left:595px;top:204px;color:#000;transform:scaleX(0.91)">Advanced-&gt;</span>
<svg style="left:785px;top:70px" width="73" height="97" viewBox="0 0 73 97" shape-rendering="crispEdges"><rect x="0" y="0" width="73" height="97" fill="#fff"/><rect x="0" y="0" width="72" height="1" fill="#808080"/><rect x="0" y="0" width="1" height="96" fill="#808080"/><rect x="1" y="1" width="71" height="95" fill="#000"/><rect x="3" y="3" width="66" height="91" fill="#fff"/><rect x="34" y="70" width="35" height="2" fill="#000"/><rect x="34" y="85" width="35" height="2" fill="#000"/><rect x="69" y="72" width="1" height="13" fill="#fff"/><polygon points="51,24 53,22 56,22 58,24 58,51 56,53 53,53 51,51" fill="#000"/><polygon points="58,28 61.5,22.599999999999994 64.39999999999998,19 67.20000000000005,16.5 69,15.400000000000006 69,59.5 68,58.80000000000001 65,56 62.200000000000045,53 58,46.599999999999994" fill="#000" shape-rendering="auto"/><path d="M64.5 26 L66 24.5 M64.5 37 L66 37 M64.5 48 L66 49.5" stroke="#fff" stroke-width="1.3" shape-rendering="auto"/></svg>
<div style="left:756px;top:184px;width:92px;height:22px;background:#fff;"></div>
<span style="left:756px;top:184px;font:bold 20px 'Liberation Sans', sans-serif;color:#000;">SBB4</span>
<div style="left:562px;top:230px;width:395px;height:1px;background:#fff;"></div>
<div style="left:562px;top:230px;width:1px;height:11px;background:#fff;"></div>
<div style="left:562px;top:241px;width:395px;height:1px;background:#808080;"></div>
<div style="left:717px;top:231px;width:1px;height:10px;background:#808080;"></div>
<div style="left:718px;top:231px;width:238px;height:10px;background:#ffff00;"></div>
<div style="left:956px;top:230px;width:1px;height:12px;background:#808080;"></div>
<div style="left:562px;top:231px;width:155px;height:10px;overflow:hidden"><span style="left:53px;top:0px;font:bold 9px 'Liberation Sans', sans-serif;color:#000;letter-spacing:0px">Parameters</span></div>
<div style="left:559px;top:236px;width:399px;height:249px;background:#d4d0c8;"></div>
<div style="left:560px;top:237px;width:1px;height:248px;background:#fff;"></div>
<div style="left:560px;top:237px;width:398px;height:1px;background:#fff;"></div>
<div style="left:562px;top:239px;width:395px;height:18px;background:linear-gradient(to right,#808080,#c0c0c0);"></div>
<svg style="left:567px;top:241px" width="9" height="13" viewBox="0 0 9 13" shape-rendering="crispEdges"><rect width="9" height="13" fill="#000"/><rect x="1" y="1" width="5" height="9" fill="#a0a0a0"/><rect x="1" y="10" width="4" height="2" fill="#a0a0a0"/><rect x="1" y="1" width="1" height="1" fill="#fff"/><rect x="3" y="1" width="1" height="1" fill="#fff"/><rect x="5" y="1" width="1" height="1" fill="#fff"/><rect x="2" y="2" width="1" height="1" fill="#fff"/><rect x="4" y="2" width="1" height="1" fill="#fff"/><rect x="1" y="3" width="1" height="1" fill="#fff"/><rect x="3" y="3" width="1" height="1" fill="#fff"/><rect x="5" y="3" width="1" height="1" fill="#fff"/><rect x="2" y="4" width="1" height="1" fill="#fff"/><rect x="4" y="4" width="1" height="1" fill="#fff"/><rect x="1" y="5" width="1" height="1" fill="#fff"/><rect x="3" y="5" width="1" height="1" fill="#fff"/><rect x="5" y="5" width="1" height="1" fill="#fff"/><rect x="2" y="6" width="1" height="1" fill="#fff"/><rect x="4" y="6" width="1" height="1" fill="#fff"/><rect x="1" y="7" width="1" height="1" fill="#fff"/><rect x="3" y="7" width="1" height="1" fill="#fff"/><rect x="5" y="7" width="1" height="1" fill="#fff"/><rect x="2" y="8" width="1" height="1" fill="#fff"/><rect x="4" y="8" width="1" height="1" fill="#fff"/><rect x="1" y="9" width="1" height="1" fill="#fff"/><rect x="3" y="9" width="1" height="1" fill="#fff"/><rect x="5" y="9" width="1" height="1" fill="#fff"/><rect x="2" y="10" width="1" height="1" fill="#fff"/><rect x="4" y="10" width="1" height="1" fill="#fff"/><rect x="1" y="11" width="1" height="1" fill="#fff"/><rect x="3" y="11" width="1" height="1" fill="#fff"/><rect x="6" y="1" width="2" height="1" fill="#fff"/><rect x="6" y="8" width="2" height="1" fill="#fff"/><rect x="5" y="10" width="3" height="1" fill="#fff"/></svg>
<span style="left:582px;top:242px;font:bold 11px 'Liberation Sans', sans-serif;color:#d4d0c8;transform:scaleX(1.105);transform-origin:0 0;-webkit-text-stroke:.25px">[1]Vented : Vifa M11WH-09-08 measured</span>
<div style="left:905px;top:241px;width:16px;height:14px;background:#d4d0c8;"></div>
<div style="left:905px;top:241px;width:15px;height:1px;background:#fff;"></div>
<div style="left:905px;top:241px;width:1px;height:13px;background:#fff;"></div>
<div style="left:906px;top:253px;width:14px;height:1px;background:#808080;"></div>
<div style="left:919px;top:242px;width:1px;height:12px;background:#808080;"></div>
<div style="left:905px;top:254px;width:16px;height:1px;background:#404040;"></div>
<div style="left:920px;top:241px;width:1px;height:14px;background:#404040;"></div>
<div style="left:909px;top:250px;width:6px;height:2px;background:#000;"></div>
<div style="left:921px;top:241px;width:16px;height:14px;background:#d4d0c8;"></div>
<div style="left:921px;top:241px;width:15px;height:1px;background:#fff;"></div>
<div style="left:921px;top:241px;width:1px;height:13px;background:#fff;"></div>
<div style="left:922px;top:253px;width:14px;height:1px;background:#808080;"></div>
<div style="left:935px;top:242px;width:1px;height:12px;background:#808080;"></div>
<div style="left:921px;top:254px;width:16px;height:1px;background:#404040;"></div>
<div style="left:936px;top:241px;width:1px;height:14px;background:#404040;"></div>
<div style="left:925px;top:244px;width:9px;height:2px;background:#fff;"></div>
<div style="left:925px;top:244px;width:1px;height:9px;background:#fff;"></div>
<div style="left:933px;top:244px;width:1px;height:9px;background:#fff;"></div>
<div style="left:925px;top:252px;width:9px;height:1px;background:#fff;"></div>
<div style="left:924px;top:243px;width:9px;height:2px;background:#808080;"></div>
<div style="left:924px;top:243px;width:1px;height:9px;background:#808080;"></div>
<div style="left:932px;top:243px;width:1px;height:9px;background:#808080;"></div>
<div style="left:924px;top:251px;width:9px;height:1px;background:#808080;"></div>
<div style="left:939px;top:241px;width:16px;height:14px;background:#d4d0c8;"></div>
<div style="left:939px;top:241px;width:15px;height:1px;background:#fff;"></div>
<div style="left:939px;top:241px;width:1px;height:13px;background:#fff;"></div>
<div style="left:940px;top:253px;width:14px;height:1px;background:#808080;"></div>
<div style="left:953px;top:242px;width:1px;height:12px;background:#808080;"></div>
<div style="left:939px;top:254px;width:16px;height:1px;background:#404040;"></div>
<div style="left:954px;top:241px;width:1px;height:14px;background:#404040;"></div>
<svg style="left:943px;top:244px" width="8" height="7" viewBox="0 0 8 7"><path d="M0 0h2l2 2.5 2-2.5h2L5 3.5 8 7H6L4 4.5 2 7H0l3-3.5z" fill="#000" shape-rendering="crispEdges"/></svg>
<div style="left:562px;top:278px;width:395px;height:191px;background:#404040;"></div>
<div style="left:562px;top:278px;width:394px;height:190px;background:#808080;"></div>
<div style="left:562px;top:278px;width:393px;height:189px;background:#fff;"></div>
<div style="left:563px;top:279px;width:392px;height:188px;background:#d4d0c8;"></div>
<div style="left:566px;top:260px;width:37px;height:1px;background:#fff;"></div>
<div style="left:565px;top:261px;width:1px;height:1px;background:#fff;"></div>
<div style="left:564px;top:262px;width:1px;height:16px;background:#fff;"></div>
<div style="left:603px;top:261px;width:1px;height:17px;background:#808080;"></div>
<div style="left:604px;top:262px;width:1px;height:16px;background:#404040;"></div>
<span class="u" style="left:570px;top:263px;color:#000;transform:scaleX(0.88)">Driver</span>
<div style="left:650px;top:260px;width:38px;height:1px;background:#fff;"></div>
<div style="left:649px;top:261px;width:1px;height:1px;background:#fff;"></div>
<div style="left:648px;top:262px;width:1px;height:16px;background:#fff;"></div>
<div style="left:688px;top:261px;width:1px;height:17px;background:#808080;"></div>
<div style="left:689px;top:262px;width:1px;height:16px;background:#404040;"></div>
<span class="u" style="left:654px;top:263px;color:#000;transform:scaleX(0.95)">Vents</span>
<div style="left:692px;top:260px;width:38px;height:1px;background:#fff;"></div>
<div style="left:691px;top:261px;width:1px;height:1px;background:#fff;"></div>
<div style="left:690px;top:262px;width:1px;height:16px;background:#fff;"></div>
<div style="left:730px;top:261px;width:1px;height:17px;background:#808080;"></div>
<div style="left:731px;top:262px;width:1px;height:16px;background:#404040;"></div>
<span class="u" style="left:696px;top:263px;color:#000;transform:scaleX(0.88)">Plot</span>
<div style="left:734px;top:260px;width:38px;height:1px;background:#fff;"></div>
<div style="left:733px;top:261px;width:1px;height:1px;background:#fff;"></div>
<div style="left:732px;top:262px;width:1px;height:16px;background:#fff;"></div>
<div style="left:772px;top:261px;width:1px;height:17px;background:#808080;"></div>
<div style="left:773px;top:262px;width:1px;height:16px;background:#404040;"></div>
<span class="u" style="left:738px;top:263px;color:#000;transform:scaleX(0.88)">Signal</span>
<div style="left:776px;top:260px;width:50px;height:1px;background:#fff;"></div>
<div style="left:775px;top:261px;width:1px;height:1px;background:#fff;"></div>
<div style="left:774px;top:262px;width:1px;height:16px;background:#fff;"></div>
<div style="left:826px;top:261px;width:1px;height:17px;background:#808080;"></div>
<div style="left:827px;top:262px;width:1px;height:16px;background:#404040;"></div>
<span class="u" style="left:779px;top:263px;color:#000;transform:scaleX(0.95)">EQ/Filter</span>
<div style="left:830px;top:260px;width:41px;height:1px;background:#fff;"></div>
<div style="left:829px;top:261px;width:1px;height:1px;background:#fff;"></div>
<div style="left:828px;top:262px;width:1px;height:16px;background:#fff;"></div>
<div style="left:871px;top:261px;width:1px;height:17px;background:#808080;"></div>
<div style="left:872px;top:262px;width:1px;height:16px;background:#404040;"></div>
<span class="u" style="left:833px;top:263px;color:#000;transform:scaleX(0.935)">Project</span>
<div style="left:604px;top:258px;width:46px;height:21px;background:#d4d0c8;"></div>
<div style="left:606px;top:258px;width:42px;height:1px;background:#fff;"></div>
<div style="left:605px;top:259px;width:1px;height:1px;background:#fff;"></div>
<div style="left:604px;top:260px;width:1px;height:19px;background:#fff;"></div>
<div style="left:648px;top:259px;width:1px;height:19px;background:#808080;"></div>
<div style="left:649px;top:260px;width:1px;height:18px;background:#404040;"></div>
<span class="u" style="left:612px;top:261px;color:#000;transform:scaleX(0.88)">Box</span>
<div style="left:571px;top:286px;width:302px;height:1px;background:#808080;"></div>
<div style="left:571px;top:286px;width:1px;height:17px;background:#808080;"></div>
<div style="left:571px;top:302px;width:302px;height:1px;background:#fff;"></div>
<div style="left:872px;top:286px;width:1px;height:17px;background:#fff;"></div>
<span class="u" style="left:571px;top:288px;color:#000;transform:scaleX(0.97)">Vented</span>
<div style="left:876px;top:286px;width:72px;height:1px;background:#808080;"></div>
<div style="left:876px;top:286px;width:1px;height:18px;background:#808080;"></div>
<div style="left:876px;top:303px;width:72px;height:1px;background:#fff;"></div>
<div style="left:947px;top:286px;width:1px;height:18px;background:#fff;"></div>
<div style="left:877px;top:287px;width:70px;height:1px;background:#fff;"></div>
<div style="left:877px;top:287px;width:1px;height:16px;background:#fff;"></div>
<div style="left:877px;top:302px;width:70px;height:1px;background:#404040;"></div>
<div style="left:946px;top:287px;width:1px;height:16px;background:#404040;"></div>
<div style="left:878px;top:301px;width:68px;height:1px;background:#808080;"></div>
<div style="left:945px;top:288px;width:1px;height:14px;background:#808080;"></div>
<span class="u" style="left:887px;top:288px;color:#000;transform:scaleX(0.9)">Box shape</span>
<div style="left:571px;top:307px;width:106px;height:1px;background:#fff;"></div>
<div style="left:571px;top:307px;width:1px;height:16px;background:#fff;"></div>
<div style="left:571px;top:322px;width:106px;height:1px;background:#808080;"></div>
<div style="left:676px;top:307px;width:1px;height:16px;background:#808080;"></div>
<span class="u" style="left:590px;top:308px;color:#000;transform:scaleX(0.905)">Rear chamber</span>
<div style="left:681px;top:307px;width:100px;height:1px;background:#fff;"></div>
<div style="left:681px;top:307px;width:1px;height:16px;background:#fff;"></div>
<div style="left:681px;top:322px;width:100px;height:1px;background:#808080;"></div>
<div style="left:780px;top:307px;width:1px;height:16px;background:#808080;"></div>
<span class="u" style="left:697px;top:308px;color:#000;transform:scaleX(0.88)">Front chamber</span>
<div style="left:571px;top:327px;width:106px;height:1px;background:#808080;"></div>
<div style="left:571px;top:327px;width:1px;height:136px;background:#808080;"></div>
<div style="left:571px;top:462px;width:106px;height:1px;background:#fff;"></div>
<div style="left:676px;top:327px;width:1px;height:136px;background:#fff;"></div>
<span class="u" style="left:576px;top:332px;color:#0000ff;transform:scaleX(0.92)">Volume:</span>
<div style="left:576px;top:347px;width:66px;height:19px;background:#a89e8a;"></div>
<div style="left:577px;top:348px;width:64px;height:17px;background:#fff;"></div>
<span class="u" style="left:579px;top:350px;color:#000;transform:scaleX(0.88)">5,32</span>
<span class="u" style="left:647px;top:355px;color:#000;transform:scaleX(0.88)">l</span>
<div style="left:576px;top:382px;width:66px;height:19px;background:#a89e8a;"></div>
<div style="left:577px;top:383px;width:64px;height:17px;background:#fff;"></div>
<span class="u" style="left:579px;top:385px;color:#000;transform:scaleX(0.88)">58,72</span>
<span class="u" style="left:646px;top:390px;color:#000;transform:scaleX(1.0)">Hz</span>
<span class="u" style="left:577px;top:368px;color:#0000ff;transform:scaleX(0.895)">Tuning freq.</span>
<span class="u" style="left:595px;top:444px;color:#000;transform:scaleX(0.91)">Advanced-&gt;</span>
<svg style="left:785px;top:310px" width="73" height="97" viewBox="0 0 73 97" shape-rendering="crispEdges"><rect x="0" y="0" width="73" height="97" fill="#fff"/><rect x="0" y="0" width="72" height="1" fill="#808080"/><rect x="0" y="0" width="1" height="96" fill="#808080"/><rect x="1" y="1" width="71" height="95" fill="#000"/><rect x="3" y="3" width="66" height="91" fill="#fff"/><rect x="34" y="70" width="35" height="2" fill="#000"/><rect x="34" y="85" width="35" height="2" fill="#000"/><rect x="69" y="72" width="1" height="13" fill="#fff"/><polygon points="51,24 53,22 56,22 58,24 58,51 56,53 53,53 51,51" fill="#000"/><polygon points="58,28 61.5,22.599999999999994 64.39999999999998,19 67.20000000000005,16.5 69,15.400000000000006 69,59.5 68,58.80000000000001 65,56 62.200000000000045,53 58,46.599999999999994" fill="#000" shape-rendering="auto"/><path d="M64.5 26 L66 24.5 M64.5 37 L66 37 M64.5 48 L66 49.5" stroke="#fff" stroke-width="1.3" shape-rendering="auto"/></svg>
<div style="left:762px;top:420px;width:153px;height:27px;background:#fff;"></div>
<span style="left:762px;top:421px;font:bold 20px 'Liberation Sans', sans-serif;color:#000;letter-spacing:-0.4px">EBS3 ext. bass</span>
<div style="left:562px;top:470px;width:395px;height:1px;background:#fff;"></div>
<div style="left:562px;top:470px;width:1px;height:11px;background:#fff;"></div>
<div style="left:562px;top:481px;width:395px;height:1px;background:#808080;"></div>
<div style="left:717px;top:471px;width:1px;height:10px;background:#808080;"></div>
<div style="left:718px;top:471px;width:238px;height:10px;background:#ff8000;"></div>
<div style="left:956px;top:470px;width:1px;height:12px;background:#808080;"></div>
<div style="left:562px;top:471px;width:155px;height:10px;overflow:hidden"><span style="left:53px;top:0px;font:bold 9px 'Liberation Sans', sans-serif;color:#000;letter-spacing:0px">Parameters</span></div>
<div style="left:559px;top:476px;width:399px;height:249px;background:#d4d0c8;"></div>
<div style="left:560px;top:477px;width:1px;height:248px;background:#fff;"></div>
<div style="left:560px;top:477px;width:398px;height:1px;background:#fff;"></div>
<div style="left:562px;top:479px;width:395px;height:18px;background:linear-gradient(to right,#808080,#c0c0c0);"></div>
<svg style="left:567px;top:481px" width="9" height="13" viewBox="0 0 9 13" shape-rendering="crispEdges"><rect width="9" height="13" fill="#000"/><rect x="1" y="1" width="5" height="9" fill="#a0a0a0"/><rect x="1" y="10" width="4" height="2" fill="#a0a0a0"/><rect x="1" y="1" width="1" height="1" fill="#fff"/><rect x="3" y="1" width="1" height="1" fill="#fff"/><rect x="5" y="1" width="1" height="1" fill="#fff"/><rect x="2" y="2" width="1" height="1" fill="#fff"/><rect x="4" y="2" width="1" height="1" fill="#fff"/><rect x="1" y="3" width="1" height="1" fill="#fff"/><rect x="3" y="3" width="1" height="1" fill="#fff"/><rect x="5" y="3" width="1" height="1" fill="#fff"/><rect x="2" y="4" width="1" height="1" fill="#fff"/><rect x="4" y="4" width="1" height="1" fill="#fff"/><rect x="1" y="5" width="1" height="1" fill="#fff"/><rect x="3" y="5" width="1" height="1" fill="#fff"/><rect x="5" y="5" width="1" height="1" fill="#fff"/><rect x="2" y="6" width="1" height="1" fill="#fff"/><rect x="4" y="6" width="1" height="1" fill="#fff"/><rect x="1" y="7" width="1" height="1" fill="#fff"/><rect x="3" y="7" width="1" height="1" fill="#fff"/><rect x="5" y="7" width="1" height="1" fill="#fff"/><rect x="2" y="8" width="1" height="1" fill="#fff"/><rect x="4" y="8" width="1" height="1" fill="#fff"/><rect x="1" y="9" width="1" height="1" fill="#fff"/><rect x="3" y="9" width="1" height="1" fill="#fff"/><rect x="5" y="9" width="1" height="1" fill="#fff"/><rect x="2" y="10" width="1" height="1" fill="#fff"/><rect x="4" y="10" width="1" height="1" fill="#fff"/><rect x="1" y="11" width="1" height="1" fill="#fff"/><rect x="3" y="11" width="1" height="1" fill="#fff"/><rect x="6" y="1" width="2" height="1" fill="#fff"/><rect x="6" y="8" width="2" height="1" fill="#fff"/><rect x="5" y="10" width="3" height="1" fill="#fff"/></svg>
<span style="left:582px;top:482px;font:bold 11px 'Liberation Sans', sans-serif;color:#d4d0c8;transform:scaleX(1.105);transform-origin:0 0;-webkit-text-stroke:.25px">[2]Vented : Vifa M11WH-09-08 measured</span>
<div style="left:905px;top:481px;width:16px;height:14px;background:#d4d0c8;"></div>
<div style="left:905px;top:481px;width:15px;height:1px;background:#fff;"></div>
<div style="left:905px;top:481px;width:1px;height:13px;background:#fff;"></div>
<div style="left:906px;top:493px;width:14px;height:1px;background:#808080;"></div>
<div style="left:919px;top:482px;width:1px;height:12px;background:#808080;"></div>
<div style="left:905px;top:494px;width:16px;height:1px;background:#404040;"></div>
<div style="left:920px;top:481px;width:1px;height:14px;background:#404040;"></div>
<div style="left:909px;top:490px;width:6px;height:2px;background:#000;"></div>
<div style="left:921px;top:481px;width:16px;height:14px;background:#d4d0c8;"></div>
<div style="left:921px;top:481px;width:15px;height:1px;background:#fff;"></div>
<div style="left:921px;top:481px;width:1px;height:13px;background:#fff;"></div>
<div style="left:922px;top:493px;width:14px;height:1px;background:#808080;"></div>
<div style="left:935px;top:482px;width:1px;height:12px;background:#808080;"></div>
<div style="left:921px;top:494px;width:16px;height:1px;background:#404040;"></div>
<div style="left:936px;top:481px;width:1px;height:14px;background:#404040;"></div>
<div style="left:925px;top:484px;width:9px;height:2px;background:#fff;"></div>
<div style="left:925px;top:484px;width:1px;height:9px;background:#fff;"></div>
<div style="left:933px;top:484px;width:1px;height:9px;background:#fff;"></div>
<div style="left:925px;top:492px;width:9px;height:1px;background:#fff;"></div>
<div style="left:924px;top:483px;width:9px;height:2px;background:#808080;"></div>
<div style="left:924px;top:483px;width:1px;height:9px;background:#808080;"></div>
<div style="left:932px;top:483px;width:1px;height:9px;background:#808080;"></div>
<div style="left:924px;top:491px;width:9px;height:1px;background:#808080;"></div>
<div style="left:939px;top:481px;width:16px;height:14px;background:#d4d0c8;"></div>
<div style="left:939px;top:481px;width:15px;height:1px;background:#fff;"></div>
<div style="left:939px;top:481px;width:1px;height:13px;background:#fff;"></div>
<div style="left:940px;top:493px;width:14px;height:1px;background:#808080;"></div>
<div style="left:953px;top:482px;width:1px;height:12px;background:#808080;"></div>
<div style="left:939px;top:494px;width:16px;height:1px;background:#404040;"></div>
<div style="left:954px;top:481px;width:1px;height:14px;background:#404040;"></div>
<svg style="left:943px;top:484px" width="8" height="7" viewBox="0 0 8 7"><path d="M0 0h2l2 2.5 2-2.5h2L5 3.5 8 7H6L4 4.5 2 7H0l3-3.5z" fill="#000" shape-rendering="crispEdges"/></svg>
<div style="left:562px;top:518px;width:395px;height:191px;background:#404040;"></div>
<div style="left:562px;top:518px;width:394px;height:190px;background:#808080;"></div>
<div style="left:562px;top:518px;width:393px;height:189px;background:#fff;"></div>
<div style="left:563px;top:519px;width:392px;height:188px;background:#d4d0c8;"></div>
<div style="left:566px;top:500px;width:37px;height:1px;background:#fff;"></div>
<div style="left:565px;top:501px;width:1px;height:1px;background:#fff;"></div>
<div style="left:564px;top:502px;width:1px;height:16px;background:#fff;"></div>
<div style="left:603px;top:501px;width:1px;height:17px;background:#808080;"></div>
<div style="left:604px;top:502px;width:1px;height:16px;background:#404040;"></div>
<span class="u" style="left:570px;top:503px;color:#000;transform:scaleX(0.88)">Driver</span>
<div style="left:650px;top:500px;width:38px;height:1px;background:#fff;"></div>
<div style="left:649px;top:501px;width:1px;height:1px;background:#fff;"></div>
<div style="left:648px;top:502px;width:1px;height:16px;background:#fff;"></div>
<div style="left:688px;top:501px;width:1px;height:17px;background:#808080;"></div>
<div style="left:689px;top:502px;width:1px;height:16px;background:#404040;"></div>
<span class="u" style="left:654px;top:503px;color:#000;transform:scaleX(0.95)">Vents</span>
<div style="left:692px;top:500px;width:38px;height:1px;background:#fff;"></div>
<div style="left:691px;top:501px;width:1px;height:1px;background:#fff;"></div>
<div style="left:690px;top:502px;width:1px;height:16px;background:#fff;"></div>
<div style="left:730px;top:501px;width:1px;height:17px;background:#808080;"></div>
<div style="left:731px;top:502px;width:1px;height:16px;background:#404040;"></div>
<span class="u" style="left:696px;top:503px;color:#000;transform:scaleX(0.88)">Plot</span>
<div style="left:734px;top:500px;width:38px;height:1px;background:#fff;"></div>
<div style="left:733px;top:501px;width:1px;height:1px;background:#fff;"></div>
<div style="left:732px;top:502px;width:1px;height:16px;background:#fff;"></div>
<div style="left:772px;top:501px;width:1px;height:17px;background:#808080;"></div>
<div style="left:773px;top:502px;width:1px;height:16px;background:#404040;"></div>
<span class="u" style="left:738px;top:503px;color:#000;transform:scaleX(0.88)">Signal</span>
<div style="left:776px;top:500px;width:50px;height:1px;background:#fff;"></div>
<div style="left:775px;top:501px;width:1px;height:1px;background:#fff;"></div>
<div style="left:774px;top:502px;width:1px;height:16px;background:#fff;"></div>
<div style="left:826px;top:501px;width:1px;height:17px;background:#808080;"></div>
<div style="left:827px;top:502px;width:1px;height:16px;background:#404040;"></div>
<span class="u" style="left:779px;top:503px;color:#000;transform:scaleX(0.95)">EQ/Filter</span>
<div style="left:830px;top:500px;width:41px;height:1px;background:#fff;"></div>
<div style="left:829px;top:501px;width:1px;height:1px;background:#fff;"></div>
<div style="left:828px;top:502px;width:1px;height:16px;background:#fff;"></div>
<div style="left:871px;top:501px;width:1px;height:17px;background:#808080;"></div>
<div style="left:872px;top:502px;width:1px;height:16px;background:#404040;"></div>
<span class="u" style="left:833px;top:503px;color:#000;transform:scaleX(0.935)">Project</span>
<div style="left:604px;top:498px;width:46px;height:21px;background:#d4d0c8;"></div>
<div style="left:606px;top:498px;width:42px;height:1px;background:#fff;"></div>
<div style="left:605px;top:499px;width:1px;height:1px;background:#fff;"></div>
<div style="left:604px;top:500px;width:1px;height:19px;background:#fff;"></div>
<div style="left:648px;top:499px;width:1px;height:19px;background:#808080;"></div>
<div style="left:649px;top:500px;width:1px;height:18px;background:#404040;"></div>
<span class="u" style="left:612px;top:501px;color:#000;transform:scaleX(0.88)">Box</span>
<div style="left:571px;top:526px;width:302px;height:1px;background:#808080;"></div>
<div style="left:571px;top:526px;width:1px;height:17px;background:#808080;"></div>
<div style="left:571px;top:542px;width:302px;height:1px;background:#fff;"></div>
<div style="left:872px;top:526px;width:1px;height:17px;background:#fff;"></div>
<span class="u" style="left:571px;top:528px;color:#000;transform:scaleX(0.97)">Vented</span>
<div style="left:876px;top:526px;width:72px;height:1px;background:#808080;"></div>
<div style="left:876px;top:526px;width:1px;height:18px;background:#808080;"></div>
<div style="left:876px;top:543px;width:72px;height:1px;background:#fff;"></div>
<div style="left:947px;top:526px;width:1px;height:18px;background:#fff;"></div>
<div style="left:877px;top:527px;width:70px;height:1px;background:#fff;"></div>
<div style="left:877px;top:527px;width:1px;height:16px;background:#fff;"></div>
<div style="left:877px;top:542px;width:70px;height:1px;background:#404040;"></div>
<div style="left:946px;top:527px;width:1px;height:16px;background:#404040;"></div>
<div style="left:878px;top:541px;width:68px;height:1px;background:#808080;"></div>
<div style="left:945px;top:528px;width:1px;height:14px;background:#808080;"></div>
<span class="u" style="left:887px;top:528px;color:#000;transform:scaleX(0.9)">Box shape</span>
<div style="left:571px;top:547px;width:106px;height:1px;background:#fff;"></div>
<div style="left:571px;top:547px;width:1px;height:16px;background:#fff;"></div>
<div style="left:571px;top:562px;width:106px;height:1px;background:#808080;"></div>
<div style="left:676px;top:547px;width:1px;height:16px;background:#808080;"></div>
<span class="u" style="left:590px;top:548px;color:#000;transform:scaleX(0.905)">Rear chamber</span>
<div style="left:681px;top:547px;width:100px;height:1px;background:#fff;"></div>
<div style="left:681px;top:547px;width:1px;height:16px;background:#fff;"></div>
<div style="left:681px;top:562px;width:100px;height:1px;background:#808080;"></div>
<div style="left:780px;top:547px;width:1px;height:16px;background:#808080;"></div>
<span class="u" style="left:697px;top:548px;color:#000;transform:scaleX(0.88)">Front chamber</span>
<div style="left:571px;top:567px;width:106px;height:1px;background:#808080;"></div>
<div style="left:571px;top:567px;width:1px;height:136px;background:#808080;"></div>
<div style="left:571px;top:702px;width:106px;height:1px;background:#fff;"></div>
<div style="left:676px;top:567px;width:1px;height:136px;background:#fff;"></div>
<span class="u" style="left:576px;top:572px;color:#0000ff;transform:scaleX(0.92)">Volume:</span>
<div style="left:576px;top:587px;width:66px;height:19px;background:#a89e8a;"></div>
<div style="left:577px;top:588px;width:64px;height:17px;background:#fff;"></div>
<span class="u" style="left:579px;top:590px;color:#000;transform:scaleX(0.88)">5,71</span>
<span class="u" style="left:647px;top:595px;color:#000;transform:scaleX(0.88)">l</span>
<div style="left:576px;top:622px;width:66px;height:19px;background:#a89e8a;"></div>
<div style="left:577px;top:623px;width:64px;height:17px;background:#fff;"></div>
<span class="u" style="left:579px;top:625px;color:#000;transform:scaleX(0.88)">47,00</span>
<span class="u" style="left:646px;top:630px;color:#000;transform:scaleX(1.0)">Hz</span>
<span class="u" style="left:577px;top:608px;color:#0000ff;transform:scaleX(0.895)">Tuning freq.</span>
<span class="u" style="left:595px;top:684px;color:#000;transform:scaleX(0.91)">Advanced-&gt;</span>
<svg style="left:785px;top:550px" width="73" height="97" viewBox="0 0 73 97" shape-rendering="crispEdges"><rect x="0" y="0" width="73" height="97" fill="#fff"/><rect x="0" y="0" width="72" height="1" fill="#808080"/><rect x="0" y="0" width="1" height="96" fill="#808080"/><rect x="1" y="1" width="71" height="95" fill="#000"/><rect x="3" y="3" width="66" height="91" fill="#fff"/><rect x="34" y="70" width="35" height="2" fill="#000"/><rect x="34" y="85" width="35" height="2" fill="#000"/><rect x="69" y="72" width="1" height="13" fill="#fff"/><polygon points="51,24 53,22 56,22 58,24 58,51 56,53 53,53 51,51" fill="#000"/><polygon points="58,28 61.5,22.599999999999994 64.39999999999998,19 67.20000000000005,16.5 69,15.400000000000006 69,59.5 68,58.80000000000001 65,56 62.200000000000045,53 58,46.599999999999994" fill="#000" shape-rendering="auto"/><path d="M64.5 26 L66 24.5 M64.5 37 L66 37 M64.5 48 L66 49.5" stroke="#fff" stroke-width="1.3" shape-rendering="auto"/></svg>
<div style="left:761px;top:662px;width:157px;height:24px;background:#fff;"></div>
<span style="left:761px;top:663px;font:bold 20px 'Liberation Sans', sans-serif;color:#000;letter-spacing:-0.4px">EBS6 ext. bass</span>
<div style="left:562px;top:710px;width:395px;height:1px;background:#fff;"></div>
<div style="left:562px;top:710px;width:1px;height:11px;background:#fff;"></div>
<div style="left:562px;top:721px;width:395px;height:1px;background:#808080;"></div>
<div style="left:717px;top:711px;width:1px;height:10px;background:#808080;"></div>
<div style="left:718px;top:711px;width:238px;height:10px;background:#00ff00;"></div>
<div style="left:956px;top:710px;width:1px;height:12px;background:#808080;"></div>
<div style="left:562px;top:711px;width:155px;height:10px;overflow:hidden"><span style="left:53px;top:0px;font:bold 9px 'Liberation Sans', sans-serif;color:#000;letter-spacing:0px">Parameters</span></div>
<div style="left:559px;top:722px;width:399px;height:2px;background:#d4d0c8;"></div>
<div style="left:559px;top:724px;width:399px;height:1px;background:#808080;"></div>
<div style="left:560px;top:477px;width:1px;height:247px;background:#fff;"></div></body></html>
